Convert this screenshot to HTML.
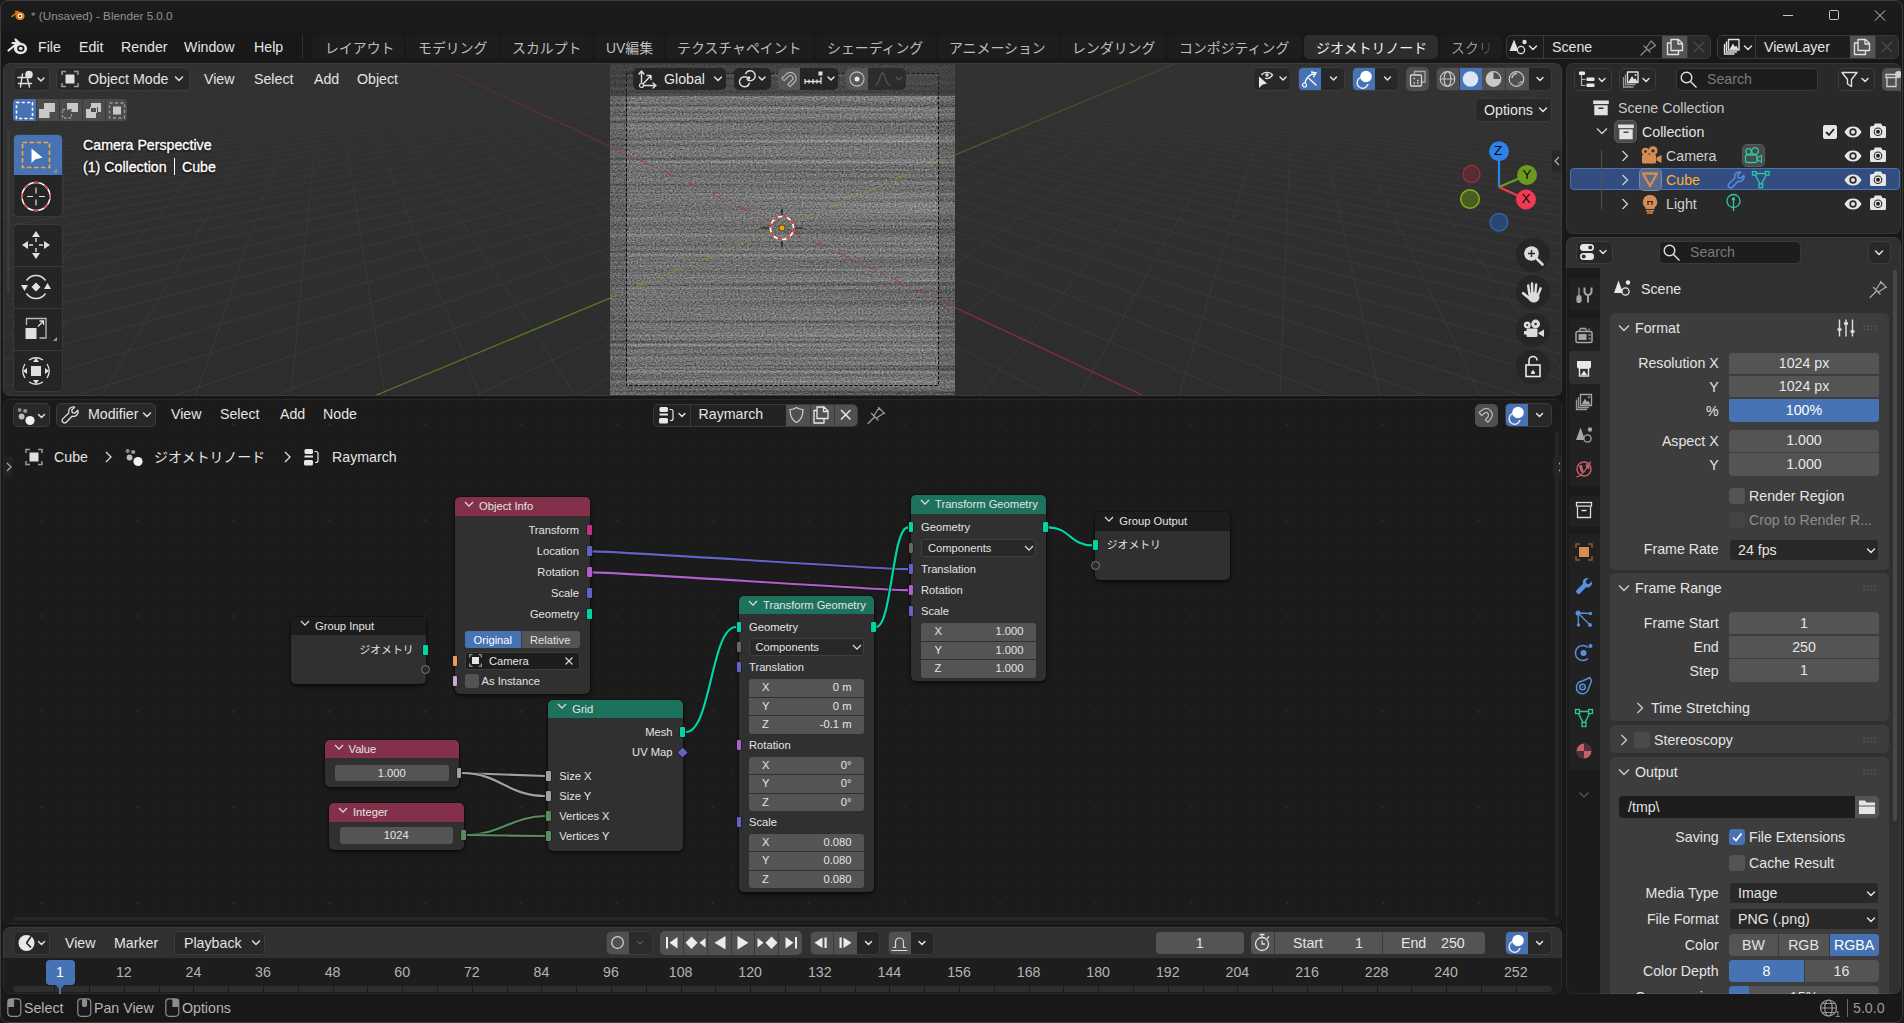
<!DOCTYPE html>
<html lang="ja">
<head>
<meta charset="utf-8">
<title>* (Unsaved) - Blender 5.0.0</title>
<style>
*{box-sizing:border-box;margin:0;padding:0}
html,body{width:1904px;height:1023px;overflow:hidden;background:#181818}
body{position:relative;font-family:"Liberation Sans","Noto Sans CJK JP",sans-serif;font-size:14.2px;color:#e4e4e4;line-height:1}
.abs,.abs *{position:absolute}
.a{position:absolute}
.t{position:absolute;white-space:nowrap;line-height:20px;height:20px}
.jp{font-size:13.9px}
.area{position:absolute;border-radius:7px;overflow:hidden}
.area::after{content:"";position:absolute;left:0;top:0;right:0;bottom:0;border-radius:7px;border:1px solid rgba(255,255,255,.06);pointer-events:none}
.btn{position:absolute;background:#282828;border:1px solid #3c3c3c;border-radius:5px}
.fld{position:absolute;background:#545454;text-align:center;line-height:21px;height:21px;color:#e6e6e6}
.sel{background:#4772b3}
.lbl{position:absolute;text-align:right;white-space:nowrap;line-height:20px;height:20px}
svg{position:absolute;overflow:visible}
.ic{fill:none;stroke:#e0e0e0;stroke-width:1.4;stroke-linecap:round;stroke-linejoin:round}
.icf{fill:#e0e0e0;stroke:none}
.chev{fill:none;stroke:#e0e0e0;stroke-width:1.5;stroke-linecap:round;stroke-linejoin:round}
.n{font-size:11.2px}
.n .t{line-height:16px;height:16px}
.node{position:absolute;background:#303030;border-radius:5px;box-shadow:0 2px 4px rgba(0,0,0,.6),0 0 0 1px #141414}
.nh{position:absolute;left:0;top:0;right:0;height:21px;border-radius:5px 5px 0 0}
.nf{position:absolute;background:#545454;height:18px;line-height:18px}
.sock{position:absolute;width:6px;height:12px;border-radius:1px}
</style>
</head>
<body>
<!-- ===== Title bar ===== -->
<div class="a" style="left:0;top:0;width:1904px;height:31px;background:#1b1b1b"></div>
<svg style="left:10px;top:7px" width="16" height="16" viewBox="0 0 16 16"><path d="M2 9.5 L8 4.5 L5.5 4.5 M8 4.5 L9.8 6" fill="none" stroke="#ea7600" stroke-width="1.6" stroke-linecap="round" stroke-linejoin="round"/><ellipse cx="10" cy="9" rx="4.6" ry="4.1" fill="#ea7600"/><circle cx="10.2" cy="9" r="2.4" fill="#fff"/><circle cx="10.2" cy="9" r="1.3" fill="#265787"/></svg>
<div class="t" style="left:31px;top:6px;font-size:11.7px;color:#929292">* (Unsaved) - Blender 5.0.0</div>
<svg style="left:1783px;top:10px" width="110" height="12" viewBox="0 0 110 12" fill="none" stroke="#c8c8c8" stroke-width="1"><path d="M0 5.5h10"/><rect x="46.5" y="0.5" width="9" height="9" rx="1"/><path d="M92 0.5l10 10M102 0.5l-10 10"/></svg>
<!-- ===== Top bar ===== -->
<div class="a" style="left:0;top:31px;width:1904px;height:33px;background:#181818"></div>
<svg style="left:6px;top:36px" width="24" height="22" viewBox="0 0 24 22"><path d="M2.5 14.5 L11.5 7 L6.5 7 M11.5 7 L9.5 3.5 L14 7.5" fill="none" stroke="#e6e6e6" stroke-width="2.2" stroke-linecap="round" stroke-linejoin="round"/><ellipse cx="14.5" cy="12.5" rx="6.6" ry="5.8" fill="#e6e6e6"/><ellipse cx="14.8" cy="12.5" rx="3.6" ry="3.3" fill="#181818"/><ellipse cx="14.8" cy="12.5" rx="1.9" ry="1.8" fill="#e6e6e6"/></svg>
<div class="t" style="left:38px;top:37px">File</div>
<div class="t" style="left:79px;top:37px">Edit</div>
<div class="t" style="left:121px;top:37px">Render</div>
<div class="t" style="left:184px;top:37px">Window</div>
<div class="t" style="left:254px;top:37px">Help</div>
<div class="a" style="left:302px;top:35px;width:1px;height:24px;background:#303030"></div>
<div class="a" style="left:312px;top:35px;width:92px;height:24px;border-radius:5px;background:#1d1d1d"></div>
<div class="a" style="left:406px;top:35px;width:93px;height:24px;border-radius:5px;background:#1d1d1d"></div>
<div class="a" style="left:500px;top:35px;width:93px;height:24px;border-radius:5px;background:#1d1d1d"></div>
<div class="a" style="left:594px;top:35px;width:70px;height:24px;border-radius:5px;background:#1d1d1d"></div>
<div class="a" style="left:665px;top:35px;width:149px;height:24px;border-radius:5px;background:#1d1d1d"></div>
<div class="a" style="left:815px;top:35px;width:121px;height:24px;border-radius:5px;background:#1d1d1d"></div>
<div class="a" style="left:937px;top:35px;width:122px;height:24px;border-radius:5px;background:#1d1d1d"></div>
<div class="a" style="left:1060px;top:35px;width:106px;height:24px;border-radius:5px;background:#1d1d1d"></div>
<div class="a" style="left:1167px;top:35px;width:135px;height:24px;border-radius:5px;background:#1d1d1d"></div>
<div class="a" style="left:1304px;top:35px;width:134px;height:24px;border-radius:5px;background:#2d2d2d"></div>
<div class="a" style="left:1440px;top:35px;width:62px;height:24px;border-radius:5px;background:#1d1d1d"></div>
<div class="t jp" style="margin-top:1px;left:325px;top:37px;color:#bdbdbd">レイアウト</div>
<div class="t jp" style="margin-top:1px;left:418px;top:37px;color:#bdbdbd">モデリング</div>
<div class="t jp" style="margin-top:1px;left:512px;top:37px;color:#bdbdbd">スカルプト</div>
<div class="t jp" style="margin-top:1px;left:606px;top:37px;color:#bdbdbd">UV編集</div>
<div class="t jp" style="margin-top:1px;left:677px;top:37px;color:#bdbdbd">テクスチャペイント</div>
<div class="t jp" style="margin-top:1px;left:827px;top:37px;color:#bdbdbd">シェーディング</div>
<div class="t jp" style="margin-top:1px;left:949px;top:37px;color:#bdbdbd">アニメーション</div>
<div class="t jp" style="margin-top:1px;left:1072px;top:37px;color:#bdbdbd">レンダリング</div>
<div class="t jp" style="margin-top:1px;left:1179px;top:37px;color:#bdbdbd">コンポジティング</div>
<div class="t jp" style="margin-top:1px;left:1316px;top:37px;color:#f0f0f0">ジオメトリノード</div>
<div class="t jp" style="margin-top:1px;left:1451px;top:37px;color:#9a9a9a;width:44px;overflow:hidden;-webkit-mask-image:linear-gradient(90deg,#000 55%,transparent 100%);mask-image:linear-gradient(90deg,#000 55%,transparent 100%)">スクリプト</div>
<!-- scene selector -->
<div class="a" style="left:1505.5px;top:35px;width:205.5px;height:24px;border-radius:5px;background:#1d1d1d;border:1px solid #3a3a3a;overflow:hidden">
  <div class="a" style="left:36px;top:0;width:1px;height:24px;background:#3a3a3a"></div>
  <div class="a" style="left:155.5px;top:-1px;width:24.5px;height:24px;background:#545454"></div>
  <div class="a" style="left:180px;top:-1px;width:1px;height:24px;background:#3a3a3a"></div>
  <div class="a" style="left:181px;top:-1px;width:26px;height:24px;background:#2a2a2a"></div>
</div>
<svg style="left:1508px;top:37px" width="30" height="20" viewBox="0 0 30 20"><path class="icf" d="M6 2.5 L10.5 14 L1.5 14 Z" /><circle class="icf" cx="16.5" cy="5" r="2.2"/><circle cx="13" cy="13" r="3.6" fill="#1d1d1d" stroke="#e0e0e0" stroke-width="1.3"/><path class="chev" d="M21.5 9 l3.5 3.5 l3.5 -3.5"/></svg>
<div class="t" style="left:1552px;top:37px">Scene</div>
<svg style="left:1639px;top:38px" width="20" height="20" viewBox="0 0 20 20"><path d="M2 17 L8 11 M5 8 L11 14 M7.5 9.5 L12 3 L16.5 7.5 L10 12" fill="none" stroke="#8a8a8a" stroke-width="1.3" stroke-linejoin="round" stroke-linecap="round"/></svg>
<svg style="left:1664.5px;top:38px" width="20" height="18" viewBox="0 0 20 18"><path class="ic" d="M6 3.5 V1.5 H13.5 L17.5 5.5 V12.5 H6 V3.5 M13 1.5 V6 H17.5 M6 5 H2.5 V16.5 H13.5 V12.5"/></svg>
<svg style="left:1692.5px;top:41px" width="12" height="12" viewBox="0 0 12 12"><path d="M1 1 L11 11 M11 1 L1 11" stroke="#4a4a4a" stroke-width="1.5" fill="none"/></svg>
<!-- view layer selector -->
<div class="a" style="left:1717px;top:35px;width:182px;height:24px;border-radius:5px;background:#1d1d1d;border:1px solid #3a3a3a;overflow:hidden">
  <div class="a" style="left:36.5px;top:0;width:1px;height:24px;background:#3a3a3a"></div>
  <div class="a" style="left:132px;top:-1px;width:24.5px;height:24px;background:#545454"></div>
  <div class="a" style="left:156.5px;top:-1px;width:1px;height:24px;background:#3a3a3a"></div>
  <div class="a" style="left:157.5px;top:-1px;width:26px;height:24px;background:#2a2a2a"></div>
</div>
<svg style="left:1722px;top:37px" width="32" height="20" viewBox="0 0 32 20"><path class="ic" d="M6.5 2.5 H17 V13 H6.5 Z M4.5 5 V15 H14.5 M2.5 7.5 V17 H12" stroke-width="1.3"/><path class="icf" d="M7.5 12.5 L11 6.5 L13 10 L14.2 8.5 L16.5 12.5 Z"/><path class="chev" d="M22.5 9 l3.5 3.5 l3.5 -3.5"/></svg>
<div class="t" style="left:1764px;top:37px">ViewLayer</div>
<svg style="left:1852px;top:38px" width="20" height="18" viewBox="0 0 20 18"><path class="ic" d="M6 3.5 V1.5 H13.5 L17.5 5.5 V12.5 H6 V3.5 M13 1.5 V6 H17.5 M6 5 H2.5 V16.5 H13.5 V12.5"/></svg>
<svg style="left:1880.5px;top:41px" width="12" height="12" viewBox="0 0 12 12"><path d="M1 1 L11 11 M11 1 L1 11" stroke="#4a4a4a" stroke-width="1.5" fill="none"/></svg>

<!-- ===== 3D Viewport ===== -->
<div class="area" id="view3d" style="left:3px;top:62.8px;width:1558.5px;height:333px;background:linear-gradient(#313131,#2d2d2d)"><div class="a" style="left:1px;top:1.2px;width:1557px;height:331.8px">
<svg style="left:0;top:0" width="1557" height="331" viewBox="0 0 1557 331">
  <defs>
    <linearGradient id="gfade" x1="0" y1="0" x2="0" y2="1"><stop offset="0" stop-color="#fff" stop-opacity="0.08"/><stop offset="0.45" stop-color="#fff" stop-opacity="0.5"/><stop offset="1" stop-color="#fff" stop-opacity="0.62"/></linearGradient>
    <linearGradient id="afade" x1="0" y1="0" x2="0" y2="1"><stop offset="0" stop-color="#fff" stop-opacity="0.3"/><stop offset="0.5" stop-color="#fff" stop-opacity="0.9"/><stop offset="1" stop-color="#fff" stop-opacity="1"/></linearGradient><mask id="amask"><rect x="0" y="0" width="1557" height="331" fill="url(#afade)"/></mask><mask id="gmask"><rect x="0" y="0" width="1557" height="331" fill="url(#gfade)"/></mask>
    <filter id="noise" x="0" y="0" width="100%" height="100%" color-interpolation-filters="sRGB">
      <feTurbulence type="fractalNoise" baseFrequency="0.0015 0.3" numOctaves="2" seed="4" result="t1"/>
      <feColorMatrix in="t1" type="matrix" values="0.8 0 0 0 0.1  0.8 0 0 0 0.1  0.8 0 0 0 0.1  0 0 0 0 1" result="b"/>
      <feTurbulence type="fractalNoise" baseFrequency="0.55 0.75" numOctaves="1" seed="9" result="t2"/>
      <feColorMatrix in="t2" type="matrix" values="1 0 0 0 0  1 0 0 0 0  1 0 0 0 0  0 0 0 0 1" result="f"/>
      <feComposite in="b" in2="f" operator="arithmetic" k1="0" k2="0.45" k3="0.55" k4="-0.068"/>
    </filter>
  </defs>
  <g mask="url(#gmask)"><path d="M0 21L378 0M0 22L391 0M0 23L404 0M0 24L418 0M0 25L431 0M0 26L444 0M0 28L457 0M0 29L470 0M0 30L484 0M0 31L497 0M0 33L510 0M0 34L523 0M0 36L536 0M0 37L550 0M0 39L563 0M0 40L576 0M0 42L589 0M0 44L603 0M0 46L616 0M0 48L629 0M0 50L642 0M0 52L655 0M0 54L669 0M0 56L682 0M0 58L695 0M0 61L708 0M0 63L721 0M0 66L735 0M0 69L748 0M0 72L761 0M0 75L774 0M0 78L787 0M0 82L801 0M0 85L814 0M0 89L827 0M22 20L0 25M0 93L840 0M45 18L0 29M0 98L853 0M66 17L0 34M0 102L867 0M87 16L0 40M0 107L880 0M107 15L0 47M0 112L893 0M126 14L-0 55M0 118L906 0M145 13L0 64M0 124L919 0M163 12L0 75M0 130L933 0M181 11L0 89M0 137L946 0M198 10L0 105M0 145L959 0M215 9L0 126M0 153L972 0M231 8L0 154M0 162L985 0M246 7L-0 192M0 171L999 0M262 6L0 247M0 182L1012 0M276 6L3 331M0 193L1025 0M291 5L98 331M0 206L1038 0M304 4L192 331M0 220L1051 0M318 3L287 331M0 236L1065 0M331 3L381 331M0 253L1078 0M344 2L476 331M0 273L1091 0M356 1L571 331M0 296L1104 0M369 1L665 331M0 323L1117 0M381 0L760 331M72 331L1131 0M393 0L854 331M172 331L1144 0M405 0L949 331M272 331L1157 0M418 0L1044 331M473 331L1183 0M443 0L1233 331M573 331L1195 1M455 0L1327 331M674 331L1207 2M468 0L1422 331M774 331L1220 3M480 0L1516 331M874 331L1233 3M493 0L1557 315M975 331L1246 4M505 0L1557 290M1075 331L1260 5M517 0L1557 268M1175 331L1274 6M530 0L1557 249M1276 331L1289 7M542 0L1557 232M1376 331L1304 7M555 0L1557 217M1476 331L1320 8M567 0L1557 203M1557 305L1336 9M580 0L1557 191M1557 212L1352 10M592 0L1557 180M1557 158L1370 11M605 0L1557 170M1557 123L1387 12M617 0L1557 160M1557 97L1406 13M629 0L1557 152M1557 79L1425 15M642 0L1557 144M1557 64L1444 16M654 0L1557 137M1557 52L1465 17M667 0L1557 130M1557 43L1486 18M679 0L1557 124M1557 35L1508 19M692 0L1557 118M1557 28L1531 21M704 0L1557 112M1557 23L1555 22M717 0L1557 107M729 0L1557 102M741 0L1557 98M754 0L1557 93M766 0L1557 89M779 0L1557 86M791 0L1557 82M804 0L1557 79M816 0L1557 75M829 0L1557 72M841 0L1557 69M853 0L1557 67M866 0L1557 64M878 0L1557 61M891 0L1557 59M903 0L1557 57M916 0L1557 54M928 0L1557 52M941 0L1557 50M953 0L1557 48M965 0L1557 46M978 0L1557 44M990 0L1557 43M1003 0L1557 41M1015 0L1557 39M1028 0L1557 38M1040 0L1557 36M1053 0L1557 35M1065 0L1557 33M1077 0L1557 32M1090 0L1557 31M1102 0L1557 29M1115 0L1557 28M1127 0L1557 27M1140 0L1557 26M1152 0L1557 24M1165 0L1557 23M1177 0L1557 22" fill="none" stroke="#424242" stroke-width="1"/></g>
  <g mask="url(#amask)"><path d="M430.3 0.0L1138.1 331.0" stroke="#8e2b3d" stroke-width="1.3" fill="none"/>
  <path d="M372.6 331.0L1170.2 0.0" stroke="#587f1f" stroke-width="1.3" fill="none"/></g>
  <!-- noise plane -->
  <rect x="606" y="0" width="345" height="331" fill="#7a7a7a" filter="url(#noise)"/>
  <path d="M606 0H951V331H606Z M623 9H934.5V321.5H623Z" fill="#000" fill-opacity="0.12" fill-rule="evenodd"/>
  <path d="M430.3 0.0L1138.1 331.0" stroke="#b03048" stroke-width="1.2" fill="none" stroke-dasharray="12 7 2 7" opacity=".75" clip-path="inset(0)" mask="url(#nm)"/>
  <mask id="nm"><rect x="606" y="32" width="345" height="299" fill="#fff"/></mask>
  <path d="M372.6 331.0L1170.2 0.0" stroke="#6f9a28" stroke-width="1.2" fill="none" stroke-dasharray="16 8 3 8" opacity=".75" mask="url(#nm)"/>
  <rect x="622.5" y="9.5" width="312" height="312" fill="none" stroke="#000" stroke-width="1" stroke-dasharray="3 2"/>
  <!-- header overlay tint over noise -->
  <rect x="606" y="0" width="345" height="32" fill="#2a2a2a" fill-opacity="0.55"/>
  <!-- 3D cursor / origin -->
  <g transform="translate(778,164)">
    <path d="M0 -21V-13 M0 13V21 M-21 0H-13 M13 0H21" stroke="#111" stroke-width="1.2"/>
    <path d="M0 -22v3 M0 19v3" stroke="#4a7fd6" stroke-width="1.4"/>
    <circle r="11.5" fill="none" stroke="#fff" stroke-width="1.6"/>
    <circle r="11.5" fill="none" stroke="#e03434" stroke-width="1.8" stroke-dasharray="4.5 4.53"/>
    <circle r="3" fill="#f5a00f" stroke="#222" stroke-width=".6"/>
  </g>
</svg>
<!-- header left -->
<div class="btn" style="left:9px;top:3px;width:37px;height:24px"></div>
<svg style="left:13px;top:6px" width="32" height="18" viewBox="0 0 32 18"><path class="ic" d="M1 7.5H14 M1.5 13.5H14.5 M5.5 4 L3.5 17 M10.5 9 L12.5 17" stroke-width="1.2"/><circle class="icf" cx="12" cy="4.5" r="3.8"/><path class="chev" d="M21 8l3 3l3 -3"/></svg>
<div class="btn" style="left:52px;top:3px;width:134px;height:24px"></div>
<svg style="left:57px;top:6px" width="18" height="18" viewBox="0 0 18 18"><rect class="icf" x="4.5" y="4.5" width="9" height="9" rx=".5"/><path d="M1 5V1.5H5 M13 1.5H17V5 M17 13V16.5H13 M5 16.5H1V13" fill="none" stroke="#9a9a9a" stroke-width="1.5"/></svg>
<div class="t" style="left:84px;top:5px">Object Mode</div>
<svg style="left:170px;top:11px" width="10" height="8" viewBox="0 0 10 8"><path class="chev" d="M1.5 2l3.5 3.5l3.5 -3.5"/></svg>
<div class="t" style="left:200px;top:5px">View</div>
<div class="t" style="left:250px;top:5px">Select</div>
<div class="t" style="left:310px;top:5px">Add</div>
<div class="t" style="left:353px;top:5px">Object</div>
<!-- tool settings: select modes -->
<div class="a" style="left:9px;top:35px;width:114px;height:22.5px;border-radius:4px;background:#4c4c4c;overflow:hidden">
  <div class="a sel" style="left:0;top:0;width:23px;height:23px"></div>
  <div class="a" style="left:23px;top:0;width:1px;height:23px;background:#3a3a3a"></div>
  <div class="a" style="left:46px;top:0;width:1px;height:23px;background:#3a3a3a"></div>
  <div class="a" style="left:69px;top:0;width:1px;height:23px;background:#3a3a3a"></div>
  <div class="a" style="left:92px;top:0;width:1px;height:23px;background:#3a3a3a"></div>
</div>
<svg style="left:9px;top:35px" width="115" height="23" viewBox="0 0 115 23">
  <rect x="3.5" y="3.5" width="16" height="16" fill="none" stroke="#fff" stroke-width="1.6" stroke-dasharray="3 2.3"/>
  <path d="M31 4H42V13H36.5V19H26V10H31Z" fill="#c8c8c8"/>
  <path d="M54 4H65V13H59.5V4Z M54 4H65V13H59V10H54Z" fill="#c8c8c8"/><rect x="49.5" y="10.5" width="9" height="8.5" fill="none" stroke="#999" stroke-width="1.3" stroke-dasharray="2.5 2"/>
  <path d="M78 4H88V13H85V8H78Z M73 10H77V14H82V10H83V19H73Z" fill="#c8c8c8"/><rect x="77.5" y="8.5" width="6" height="5" fill="#4c4c4c" stroke="#c8c8c8" stroke-width="1"/>
  <rect x="96.5" y="4" width="15" height="15" fill="none" stroke="#999" stroke-width="1.3" stroke-dasharray="3 2.5"/><rect x="100" y="7.5" width="8" height="8" fill="#c8c8c8"/>
</svg>
<!-- toolbar -->
<div class="a" style="left:9px;top:70.5px;width:50px;height:83px;border-radius:5px;background:#252525;border:1px solid #3a3a3a;overflow:hidden"><div class="a sel" style="left:-1px;top:-1px;width:50px;height:41px"></div></div>
<div class="a" style="left:9px;top:160px;width:50px;height:168px;border-radius:5px;background:#252525;border:1px solid #3a3a3a"></div>
<div class="a" style="left:10px;top:202px;width:48px;height:1px;background:#3a3a3a"></div>
<div class="a" style="left:10px;top:244px;width:48px;height:1px;background:#3a3a3a"></div>
<div class="a" style="left:10px;top:286px;width:48px;height:1px;background:#3a3a3a"></div>
<div class="a" style="left:2.5px;top:66px;width:3.5px;height:164px;border-radius:2px;background:#3a3a3a"></div>
<svg style="left:9px;top:72px" width="50" height="256" viewBox="0 0 50 256">
  <rect x="9.5" y="6.5" width="27" height="25" fill="none" stroke="#f0a83a" stroke-width="1.7" stroke-dasharray="4.5 2.5"/>
  <path d="M18.5 12.5V27L22 23.5L29.5 21.5Z" fill="#fff"/>
  <path d="M44 32.5V36.5H40Z M44 201V205H40Z" fill="#9a9a9a"/>
  <g transform="translate(23,60.5)"><circle r="14" fill="none" stroke="#fff" stroke-width="1.5"/><circle r="14" fill="none" stroke="#d94a4a" stroke-width="1.7" stroke-dasharray="5.5 5.5" stroke-dashoffset="2.7"/><path d="M0 -9V-3 M0 3V9 M-9 0H-3 M3 0H9" stroke="#ddd" stroke-width="1.2"/></g>
  <g transform="translate(23,109)" fill="#e0e0e0"><path d="M0 -14l4 6h-8z M0 14l4 -6h-8z M-14 0l6 -4v8z M14 0l-6 -4v8z"/><path d="M-.7 -7h1.4v4h-1.4z M-.7 3h1.4v4h-1.4z M-7 -.7h4v1.4h-4z M3 -.7h4v1.4h-4z"/></g>
  <g transform="translate(23,151)"><path d="M-9.5 -6.5A11.5 11.5 0 0 1 9.5 -6.5 M9.5 6.5A11.5 11.5 0 0 1 -9.5 6.5" fill="none" stroke="#e0e0e0" stroke-width="1.4"/><path d="M-15 -2h7l-3.5 6z M15 2h-7l3.5 -6z M0 -4.5l4.5 4.5l-4.5 4.5l-4.5 -4.5z" fill="#e0e0e0"/></g>
  <g transform="translate(23,193)"><rect x="-10.5" y="-1" width="11" height="11" fill="#e0e0e0"/><path d="M-9.5 -4V-10.5H10V9H3.5" fill="none" stroke="#bbb" stroke-width="1.3"/><path d="M2 -2.5L7 -7.5 M3.5 -8h4v4" fill="none" stroke="#e0e0e0" stroke-width="1.3"/></g>
  <g transform="translate(23,235)"><rect x="-5" y="-5" width="10" height="10" fill="#e0e0e0"/><path d="M-7 -11A13 13 0 0 1 7 -11 M11 -7A13 13 0 0 1 11 7 M7 11A13 13 0 0 1 -7 11 M-11 7A13 13 0 0 1 -11 -7" fill="none" stroke="#e0e0e0" stroke-width="1.3"/><path d="M0 -13l3 4h-6z M0 13l3 -4h-6z M-13 0l4 -3v6z M13 0l-4 -3v6z" fill="#e0e0e0"/></g>
</svg>
<div class="t" style="left:79px;top:71px;color:#fff;-webkit-text-stroke:.35px #fff;text-shadow:0 1px 2px #000,0 0 2px #000">Camera Perspective</div>
<div class="t" style="left:79px;top:93px;color:#fff;-webkit-text-stroke:.35px #fff;text-shadow:0 1px 2px #000,0 0 2px #000">(1) Collection <span style="display:inline-block;width:1.5px;height:17px;background:#fff;vertical-align:-3px;margin:0 3px"></span> Cube</div>
<!-- header centre -->
<div class="a" style="left:629px;top:3.7px;width:93px;height:22.3px;border-radius:5px;background:#252525"></div>
<svg style="left:633px;top:5px" width="22" height="20" viewBox="0 0 22 20"><path class="ic" d="M4.5 14V2.5 M2 5L4.5 2L7 5 M6.5 16.5H18.5 M16 14l3 2.5l-3 2.5 M6 15L13.5 7 M10 6.5h4v4" stroke-width="1.2"/><circle cx="4.5" cy="16.5" r="2" fill="#252525" stroke="#e0e0e0" stroke-width="1.2"/></svg>
<div class="t" style="left:660px;top:5px">Global</div>
<svg style="left:709px;top:11px" width="10" height="8" viewBox="0 0 10 8"><path class="chev" d="M1.5 2l3.5 3.5l3.5 -3.5"/></svg>
<div class="a" style="left:730px;top:3.7px;width:37px;height:22.3px;border-radius:5px;background:#252525"></div>
<svg style="left:733px;top:5px" width="32" height="20" viewBox="0 0 32 20"><circle cx="7.5" cy="12.8" r="5" fill="none" stroke="#e0e0e0" stroke-width="1.4" stroke-dasharray="26 5.4" stroke-dashoffset="-1"/><circle cx="13.2" cy="6.8" r="5" fill="none" stroke="#e0e0e0" stroke-width="1.4" stroke-dasharray="26 5.4" stroke-dashoffset="-17"/><circle class="icf" cx="11.7" cy="9" r="1.7"/><path class="chev" d="M22 8l3 3l3 -3"/></svg>
<div class="a" style="left:774px;top:3.7px;width:60px;height:22.3px;border-radius:5px;background:#252525;overflow:hidden"><div class="a" style="left:0;top:0;width:22px;height:24px;background:#565656"></div></div>
<svg style="left:776px;top:5px" width="58" height="20" viewBox="0 0 58 20"><g transform="translate(9.5,10) rotate(45)"><path d="M-4.2 5.5V-1.2A4.2 4.2 0 0 1 4.2 -1.2V5.5" fill="none" stroke="#b4b4b4" stroke-width="4.4"/><path d="M-4.2 4.5V-1.2A4.2 4.2 0 0 1 4.2 -1.2V4.5" fill="none" stroke="#565656" stroke-width="2"/></g><path d="M25 12.5h16 M25 10v5 M29 10.5v4 M33 10v5 M37 10.5v4 M41 8v7" stroke="#e0e0e0" stroke-width="1.3" fill="none"/><rect class="icf" x="38.5" y="2.5" width="4" height="4"/><path class="chev" d="M48 8l3 3l3 -3"/></svg>
<div class="a" style="left:842px;top:3.7px;width:60px;height:22.3px;border-radius:5px;background:#2c2c2c;overflow:hidden"><div class="a" style="left:0;top:0;width:22px;height:24px;background:#565656"></div></div>
<svg style="left:844px;top:5px" width="58" height="20" viewBox="0 0 58 20"><circle cx="9" cy="10" r="7" fill="none" stroke="#b0b0b0" stroke-width="1.3"/><circle cx="9" cy="10" r="2.5" fill="#e8e8e8"/><path d="M27 16C32 16 31.5 4 34.5 4S37 16 42 16" fill="none" stroke="#555" stroke-width="1.3"/><path d="M48 8l3 3l3 -3" fill="none" stroke="#555" stroke-width="1.4"/></svg>
<!-- header right -->
<div class="btn" style="left:1249px;top:3px;width:38px;height:24px"></div>
<svg style="left:1252px;top:5px" width="34" height="20" viewBox="0 0 34 20"><path d="M3 7.5V19l3.3 -3.2l4.7 -1.3Z" fill="#e8e8e8"/><path d="M5.5 6C8 2.5 14 2.5 16.5 6C14 9.5 11 10 9 9.2" fill="none" stroke="#e0e0e0" stroke-width="1.3"/><circle cx="11" cy="6" r="1.7" fill="#e0e0e0"/><path class="chev" d="M24 8l3 3l3 -3"/></svg>
<div class="btn" style="left:1294px;top:3px;width:47px;height:24px;overflow:hidden"><div class="a sel" style="left:-1px;top:-1px;width:23px;height:24px"></div></div>
<svg style="left:1296px;top:5px" width="44" height="20" viewBox="0 0 44 20"><path d="M5 15.5C5 9 10 5 15.5 4 M11.5 3l4.5 1l-2.5 3.8 M9 9.5L16 16" fill="none" stroke="#fff" stroke-width="1.3" stroke-linecap="round"/><circle cx="4.5" cy="16" r="2" fill="#4772b3" stroke="#fff" stroke-width="1.2"/><path class="chev" d="M30.5 8l3 3l3 -3"/></svg>
<div class="btn" style="left:1348px;top:3px;width:47px;height:24px;overflow:hidden"><div class="a sel" style="left:-1px;top:-1px;width:23px;height:24px"></div></div>
<svg style="left:1350px;top:5px" width="44" height="20" viewBox="0 0 44 20"><circle cx="12" cy="7.5" r="5.8" fill="#fff"/><path d="M7 8.5A5.5 5.5 0 1 0 14 15" fill="none" stroke="#dfe6f2" stroke-width="1.4"/><path class="chev" d="M30.5 8l3 3l3 -3"/></svg>
<div class="a" style="left:1402px;top:3px;width:23px;height:24px;border-radius:5px;background:#4f4f4f"></div>
<svg style="left:1404px;top:5px" width="20" height="20" viewBox="0 0 20 20"><path d="M6.5 5.5V2.5H17V13H14" fill="none" stroke="#aaa" stroke-width="1.3"/><rect x="2.5" y="6" width="11" height="11" rx="1" fill="none" stroke="#d8d8d8" stroke-width="1.3"/><path d="M5.5 14h1.5 M9 14h1.5 M5.5 9.5h1.5 M9 11.5h1.5" stroke="#d8d8d8" stroke-width="1.3"/></svg>
<div class="a" style="left:1432px;top:3px;width:116px;height:24px;border-radius:5px;background:#252525;border:1px solid #3a3a3a;overflow:hidden"><div class="a" style="left:-1px;top:-1px;width:93px;height:24px;background:#4f4f4f"></div><div class="a sel" style="left:22px;top:-1px;width:23px;height:24px"></div><div class="a" style="left:22px;top:-1px;width:1px;height:24px;background:#3a3a3a"></div><div class="a" style="left:68px;top:-1px;width:1px;height:24px;background:#3a3a3a"></div></div>
<svg style="left:1432px;top:3px" width="116" height="24" viewBox="0 0 116 24"><g fill="none" stroke="#c8c8c8" stroke-width="1.2"><circle cx="11.5" cy="12" r="7.3"/><ellipse cx="11.5" cy="12" rx="3.4" ry="7.3"/><path d="M4.2 12h14.6"/></g><circle cx="34.5" cy="12" r="7.8" fill="#dde4f4"/><circle cx="57.5" cy="12" r="7.3" fill="none" stroke="#c8c8c8" stroke-width="1.2"/><path d="M57.5 4.7A7.3 7.3 0 1 0 64.8 12H57.5Z" fill="#c8c8c8"/><circle cx="80.5" cy="12" r="7.3" fill="none" stroke="#c8c8c8" stroke-width="1.2"/><path d="M76 11A5 5 0 0 1 81 6.5" fill="none" stroke="#c8c8c8" stroke-width="1.6"/><path d="M84.5 16l2 -2 M82 17.5l3.5 -3.5" stroke="#c8c8c8" stroke-width="1"/><path class="chev" d="M101 10.5l3 3l3 -3"/></svg>
<div class="btn" style="left:1471px;top:34px;width:77px;height:24px"></div>
<div class="t" style="left:1480px;top:36px">Options</div>
<svg style="left:1534px;top:42px" width="10" height="8" viewBox="0 0 10 8"><path class="chev" d="M1.5 2l3.5 3.5l3.5 -3.5"/></svg>
<div class="a" style="left:1548px;top:86px;width:9px;height:22px;border-radius:4px 0 0 4px;background:#262626"></div>
<svg style="left:1549px;top:92px" width="8" height="10" viewBox="0 0 8 10"><path d="M6 1L2 5l4 4" fill="none" stroke="#aaa" stroke-width="1.3"/></svg>
<!-- nav gizmo -->
<svg style="left:1450px;top:70px" width="100" height="110" viewBox="0 0 100 110">
  <g transform="translate(-1454,-134)">
  <path d="M1499 187V151" stroke="#2d82e8" stroke-width="2.2"/><path d="M1499 187L1527 175" stroke="#6b9a1f" stroke-width="2.2"/><path d="M1499 187L1526 199.5" stroke="#ef3a52" stroke-width="2.2"/>
  <circle cx="1471.5" cy="174" r="8.5" fill="#6a2a35" fill-opacity=".75" stroke="#93323f" stroke-width="1.3"/>
  <circle cx="1470" cy="199" r="9.3" fill="#4c5e1e" stroke="#80b223" stroke-width="1.5"/>
  <circle cx="1499" cy="222.3" r="8.8" fill="#284670" stroke="#2f66b3" stroke-width="1.3"/>
  <circle cx="1499" cy="151.3" r="10" fill="#2d82e8"/><circle cx="1527" cy="175" r="10" fill="#6b9a1f"/><circle cx="1526" cy="199.5" r="10" fill="#ef3a52"/>
  </g>
</svg>
<div class="t" style="left:1490px;top:77px;color:#0a0a0a;font-size:13.5px">Z</div>
<div class="t" style="left:1518.5px;top:101px;color:#0a0a0a;font-size:13.5px">Y</div>
<div class="t" style="left:1517.5px;top:125.5px;color:#0a0a0a;font-size:13.5px">X</div>
<div class="a" style="left:1512.3px;top:174.2px;width:33.4px;height:33.4px;border-radius:17px;background:#262626"></div>
<div class="a" style="left:1512.3px;top:211.2px;width:33.4px;height:33.4px;border-radius:17px;background:#262626"></div>
<div class="a" style="left:1512.3px;top:249.2px;width:33.4px;height:33.4px;border-radius:17px;background:#262626"></div>
<div class="a" style="left:1512.3px;top:286.2px;width:33.4px;height:33.4px;border-radius:17px;background:#262626"></div>
<svg style="left:1513px;top:174.7px" width="32" height="144" viewBox="0 0 32 144">
  <circle cx="14.5" cy="14.5" r="7.3" fill="#dcdcdc"/><path d="M20 20l5.5 5.5" stroke="#dcdcdc" stroke-width="2.6" stroke-linecap="round"/><path d="M11 14.5h7 M14.5 11v7" stroke="#252525" stroke-width="1.4"/>
  <g transform="translate(16,54)" fill="#dcdcdc" stroke="#dcdcdc" stroke-linecap="round"><ellipse cx=".8" cy="4.2" rx="5.6" ry="5.2" stroke="none"/><path d="M-3.6 1L-4.8 -7.6 M-.8 0L-1 -9.6 M2.3 .5L3.2 -8.6 M4.8 2.5L7.6 -4.6" stroke-width="2.5" fill="none"/><path d="M-3.5 5.5L-9.8 .2" stroke-width="2.8" fill="none"/></g>
  <g transform="translate(16,91)" fill="#dcdcdc"><circle cx="-5.8" cy="-5" r="3.5"/><circle cx="2.6" cy="-6" r="4.4"/><circle cx="-5.8" cy="-5" r="1" fill="#262626"/><circle cx="2.6" cy="-6" r="1.2" fill="#262626"/><rect x="-6.5" y="-1.5" width="11" height="8.5" rx="1.2"/><rect x="-9" y="1" width="3" height="3.5"/><path d="M5.5 2.8l5.5 -3.3v7.6l-5.5 -3.3z"/></g>
  <g transform="translate(16,128)"><rect x="-7" y="-2" width="14" height="11.5" fill="none" stroke="#e8e8e8" stroke-width="1.6"/><path d="M-4 -2V-6.5A4 4 0 0 1 4 -6.5" fill="none" stroke="#e8e8e8" stroke-width="1.6"/><path d="M-1.8 7h3.6V4.5h-.8L0 2.5L-1 4.5h-.8z" fill="#e8e8e8"/></g>
</svg>
</div></div>
<!-- ===== Node Editor ===== -->
<div class="area n" id="nodeed" style="left:3px;top:399px;width:1558.5px;height:524.5px;background:#1b1b1b"><div class="a" style="left:1px;top:0;width:1557px;height:524.5px">
<svg style="left:0;top:0" width="1557" height="522"><defs>
<pattern id="dsm" x="17.84" y="5.24" width="19.16" height="19.16" patternUnits="userSpaceOnUse"><rect x="0.3" y="0.3" width="1.4" height="1.4" fill="#242424"/></pattern>
<pattern id="dbg" x="36.50" y="23.90" width="95.8" height="95.8" patternUnits="userSpaceOnUse"><rect x="0.5" y="0.5" width="2" height="2" fill="#2c2c2c"/></pattern></defs>
<rect width="1557" height="522" fill="url(#dsm)"/><rect width="1557" height="522" fill="url(#dbg)"/></svg>
<svg style="left:0;top:0" width="1557" height="522"><path d="M588.0 152.3C617.1 152.3 874.9 170.2 904.0 170.2" fill="none" stroke="#111" stroke-width="3.8000000000000003" stroke-opacity=".55"/><path d="M588.0 152.3C617.1 152.3 874.9 170.2 904.0 170.2" fill="none" stroke="#6363c7" stroke-width="2.2"/><path d="M588.0 173.3C617.1 173.3 874.9 191.2 904.0 191.2" fill="none" stroke="#111" stroke-width="3.8000000000000003" stroke-opacity=".55"/><path d="M588.0 173.3C617.1 173.3 874.9 191.2 904.0 191.2" fill="none" stroke="#b05fcf" stroke-width="2.2"/><path d="M458.0 374.0C462.9 374.0 536.1 377.0 541.0 377.0" fill="none" stroke="#111" stroke-width="3.8000000000000003" stroke-opacity=".55"/><path d="M458.0 374.0C462.9 374.0 536.1 377.0 541.0 377.0" fill="none" stroke="#a1a1a1" stroke-width="2.2"/><path d="M458.0 374.0C495.4 374.0 503.6 397.0 541.0 397.0" fill="none" stroke="#111" stroke-width="3.8000000000000003" stroke-opacity=".55"/><path d="M458.0 374.0C495.4 374.0 503.6 397.0 541.0 397.0" fill="none" stroke="#a1a1a1" stroke-width="2.2"/><path d="M463.0 436.0C493.9 436.0 510.1 417.0 541.0 417.0" fill="none" stroke="#111" stroke-width="3.8000000000000003" stroke-opacity=".55"/><path d="M463.0 436.0C493.9 436.0 510.1 417.0 541.0 417.0" fill="none" stroke="#598c5c" stroke-width="2.2"/><path d="M463.0 436.0C464.6 436.0 539.4 437.0 541.0 437.0" fill="none" stroke="#111" stroke-width="3.8000000000000003" stroke-opacity=".55"/><path d="M463.0 436.0C464.6 436.0 539.4 437.0 541.0 437.0" fill="none" stroke="#598c5c" stroke-width="2.2"/><path d="M682.0 333.0C707.0 333.0 707.0 228.0 732.0 228.0" fill="none" stroke="#111" stroke-width="3.8000000000000003" stroke-opacity=".55"/><path d="M682.0 333.0C707.0 333.0 707.0 228.0 732.0 228.0" fill="none" stroke="#00d6a3" stroke-width="2.2"/><path d="M872.0 228.0C888.0 228.0 888.0 128.3 904.0 128.3" fill="none" stroke="#111" stroke-width="3.8000000000000003" stroke-opacity=".55"/><path d="M872.0 228.0C888.0 228.0 888.0 128.3 904.0 128.3" fill="none" stroke="#00d6a3" stroke-width="2.2"/><path d="M1044.0 128.3C1066.0 128.3 1066.0 146.3 1088.0 146.3" fill="none" stroke="#111" stroke-width="3.8000000000000003" stroke-opacity=".55"/><path d="M1044.0 128.3C1066.0 128.3 1066.0 146.3 1088.0 146.3" fill="none" stroke="#00d6a3" stroke-width="2.2"/></svg>
<div class="node" style="left:451px;top:98px;width:134.5px;height:197px"><div class="nh" style="background:#83314a;height:19px"></div><svg style="left:9px;top:3.8px" width="10" height="7" viewBox="0 0 10 7"><path d="M1 1l4 4.2l4-4.2" fill="none" stroke="#e0e0e0" stroke-width="1.2"/></svg><div class="t" style="left:24px;top:1.1px">Object Info</div><div class="t" style="right:10.5px;top:25.299999999999955px">Transform</div><div class="a" style="left:132.1px;top:28.299999999999955px;width:4.8px;height:10px;border-radius:1px;background:#c72e86;box-shadow:0 0 0 .6px #181818"></div><div class="t" style="right:10.5px;top:46.24999999999996px">Location</div><div class="a" style="left:132.1px;top:49.24999999999996px;width:4.8px;height:10px;border-radius:1px;background:#6363c7;box-shadow:0 0 0 .6px #181818"></div><div class="t" style="right:10.5px;top:67.19999999999996px">Rotation</div><div class="a" style="left:132.1px;top:70.19999999999996px;width:4.8px;height:10px;border-radius:1px;background:#b05fcf;box-shadow:0 0 0 .6px #181818"></div><div class="t" style="right:10.5px;top:88.14999999999995px">Scale</div><div class="a" style="left:132.1px;top:91.14999999999995px;width:4.8px;height:10px;border-radius:1px;background:#6363c7;box-shadow:0 0 0 .6px #181818"></div><div class="t" style="right:10.5px;top:109.09999999999995px">Geometry</div><div class="a" style="left:132.1px;top:112.09999999999995px;width:4.8px;height:10px;border-radius:1px;background:#00d6a3;box-shadow:0 0 0 .6px #181818"></div><div class="a" style="left:10px;top:134px;width:115px;height:17px;border-radius:3px;background:#545454;overflow:hidden"><div class="a sel" style="left:0;top:0;width:56px;height:17px"></div><div class="a" style="left:56px;top:0;width:1px;height:17px;background:#3a3a3a"></div></div><div class="t" style="left:18.5px;top:134.5px;color:#fff">Original</div><div class="t" style="left:75px;top:134.5px">Relative</div><div class="a" style="left:10px;top:154.5px;width:115px;height:18px;border-radius:3px;background:#1d1d1d;border:1px solid #3d3d3d"></div><svg style="left:14px;top:157px" width="13" height="13" viewBox="0 0 13 13"><rect x="3" y="3" width="7" height="7" fill="#e6e6e6"/><path d="M.7 3.5V.7H3.5 M9.5 .7H12.3V3.5 M12.3 9.5V12.3H9.5 M3.5 12.3H.7V9.5" fill="none" stroke="#aaa" stroke-width="1.1"/></svg><div class="t" style="left:34px;top:155.5px">Camera</div><svg style="left:110px;top:160px" width="8" height="8" viewBox="0 0 8 8"><path d="M.5 .5l7 7M7.5 .5l-7 7" stroke="#ddd" stroke-width="1.1"/></svg><div class="a" style="left:-2.4px;top:158.5px;width:4.8px;height:10px;border-radius:1px;background:#ed9e5c;box-shadow:0 0 0 .6px #181818"></div><div class="a" style="left:10px;top:177px;width:13.5px;height:13.5px;border-radius:3px;background:#545454"></div><div class="t" style="left:26.5px;top:175.5px">As Instance</div><div class="a" style="left:-2.4px;top:179px;width:4.8px;height:10px;border-radius:1px;background:#cca6d6;box-shadow:0 0 0 .6px #181818"></div></div>
<div class="node" style="left:287px;top:217.5px;width:134.5px;height:67px"><div class="nh" style="background:#1c1c1c;height:18.5px"></div><svg style="left:9px;top:3.8px" width="10" height="7" viewBox="0 0 10 7"><path d="M1 1l4 4.2l4-4.2" fill="none" stroke="#e0e0e0" stroke-width="1.2"/></svg><div class="t" style="left:24px;top:1.1px">Group Input</div><div class="t" style="right:12px;top:25.0px"><span style="font-size:10.8px">ジオメトリ</span></div><div class="a" style="left:132.1px;top:28.0px;width:4.8px;height:10px;border-radius:1px;background:#00d6a3;box-shadow:0 0 0 .6px #181818"></div><div class="a" style="left:130.0px;top:48.0px;width:9px;height:9px;border-radius:5px;background:#2a2a2a;border:1px solid #7a7a7a"></div></div>
<div class="node" style="left:320.5px;top:340.79999999999995px;width:134.5px;height:47px"><div class="nh" style="background:#83314a;height:18.7px"></div><svg style="left:9px;top:3.8px" width="10" height="7" viewBox="0 0 10 7"><path d="M1 1l4 4.2l4-4.2" fill="none" stroke="#e0e0e0" stroke-width="1.2"/></svg><div class="t" style="left:24px;top:1.1px">Value</div><div class="nf" style="left:10.5px;top:25px;width:113.5px;height:16px;line-height:16px;border-radius:3px;text-align:center">1.000</div><div class="a" style="left:132.1px;top:28px;width:4.8px;height:10px;border-radius:1px;background:#a1a1a1;box-shadow:0 0 0 .6px #181818"></div></div>
<div class="node" style="left:325px;top:404px;width:134.5px;height:46.5px"><div class="nh" style="background:#83314a;height:18.5px"></div><svg style="left:9px;top:3.8px" width="10" height="7" viewBox="0 0 10 7"><path d="M1 1l4 4.2l4-4.2" fill="none" stroke="#e0e0e0" stroke-width="1.2"/></svg><div class="t" style="left:24px;top:1.1px">Integer</div><div class="nf" style="left:10.5px;top:24px;width:113.5px;height:17px;line-height:17px;border-radius:3px;text-align:center">1024</div><div class="a" style="left:132.1px;top:27px;width:4.8px;height:10px;border-radius:1px;background:#598c5c;box-shadow:0 0 0 .6px #181818"></div></div>
<div class="node" style="left:544.2px;top:300.5px;width:134.8px;height:151px"><div class="nh" style="background:#1d725e;height:18.7px"></div><svg style="left:9px;top:3.8px" width="10" height="7" viewBox="0 0 10 7"><path d="M1 1l4 4.2l4-4.2" fill="none" stroke="#e0e0e0" stroke-width="1.2"/></svg><div class="t" style="left:24px;top:1.1px">Grid</div><div class="t" style="right:10.5px;top:24.5px">Mesh</div><div class="a" style="left:132.1px;top:27.5px;width:4.8px;height:10px;border-radius:1px;background:#00d6a3;box-shadow:0 0 0 .6px #181818"></div><div class="t" style="right:10.5px;top:44.89999999999998px">UV Map</div><div class="a" style="left:130.9px;top:49.299999999999976px;width:7.2px;height:7.2px;background:#6363c7;transform:rotate(45deg);box-shadow:0 0 0 .6px #111"></div><div class="t" style="left:11px;top:68.5px">Size X</div><div class="a" style="left:-2.4px;top:71.5px;width:4.8px;height:10px;border-radius:1px;background:#a1a1a1;box-shadow:0 0 0 .6px #181818"></div><div class="t" style="left:11px;top:88.5px">Size Y</div><div class="a" style="left:-2.4px;top:91.5px;width:4.8px;height:10px;border-radius:1px;background:#a1a1a1;box-shadow:0 0 0 .6px #181818"></div><div class="t" style="left:11px;top:108.70000000000005px">Vertices X</div><div class="a" style="left:-2.4px;top:111.70000000000005px;width:4.8px;height:10px;border-radius:1px;background:#598c5c;box-shadow:0 0 0 .6px #181818"></div><div class="t" style="left:11px;top:128.5px">Vertices Y</div><div class="a" style="left:-2.4px;top:131.5px;width:4.8px;height:10px;border-radius:1px;background:#598c5c;box-shadow:0 0 0 .6px #181818"></div></div>
<div class="node" style="left:735px;top:197.29999999999995px;width:134.5px;height:295.5px"><div class="nh" style="background:#1d725e;height:17.5px"></div><svg style="left:9px;top:3.8px" width="10" height="7" viewBox="0 0 10 7"><path d="M1 1l4 4.2l4-4.2" fill="none" stroke="#e0e0e0" stroke-width="1.2"/></svg><div class="t" style="left:24px;top:1.1px">Transform Geometry</div><div class="t" style="left:10px;top:22.700000000000045px">Geometry</div><div class="a" style="left:-2.4px;top:25.700000000000045px;width:4.8px;height:10px;border-radius:1px;background:#00d6a3;box-shadow:0 0 0 .6px #181818"></div><div class="a" style="left:132.1px;top:25.700000000000045px;width:4.8px;height:10px;border-radius:1px;background:#00d6a3;box-shadow:0 0 0 .6px #181818"></div><div class="a" style="left:9.5px;top:42.200000000000045px;width:115px;height:17.5px;border-radius:3px;background:#282828;border:1px solid #3f3f3f"></div><div class="t" style="left:16.5px;top:43.200000000000045px">Components</div><svg style="left:112.5px;top:48.200000000000045px" width="10" height="7" viewBox="0 0 10 7"><path d="M1 1l4 4.2l4-4.2" fill="none" stroke="#e0e0e0" stroke-width="1.2"/></svg><div class="a" style="left:-2.4px;top:45.700000000000045px;width:4.8px;height:10px;border-radius:1px;background:#666666;box-shadow:0 0 0 .6px #181818"></div><div class="t" style="left:10px;top:62.700000000000045px">Translation</div><div class="a" style="left:-2.4px;top:65.70000000000005px;width:4.8px;height:10px;border-radius:1px;background:#6363c7;box-shadow:0 0 0 .6px #181818"></div><div class="nf" style="left:9.5px;top:82.90000000000009px;width:115px;height:17.6px;line-height:17.6px;border-radius:3px 3px 0 0"><span class="a" style="left:13.5px">X</span><span class="a" style="right:12px">0 m</span></div><div class="nf" style="left:9.5px;top:101.50000000000009px;width:115px;height:17.6px;line-height:17.6px;border-radius:0"><span class="a" style="left:13.5px">Y</span><span class="a" style="right:12px">0 m</span></div><div class="nf" style="left:9.5px;top:120.1000000000001px;width:115px;height:17.6px;line-height:17.6px;border-radius:0 0 3px 3px"><span class="a" style="left:13.5px">Z</span><span class="a" style="right:12px">-0.1 m</span></div><div class="t" style="left:10px;top:140.5px">Rotation</div><div class="a" style="left:-2.4px;top:143.5px;width:4.8px;height:10px;border-radius:1px;background:#b05fcf;box-shadow:0 0 0 .6px #181818"></div><div class="nf" style="left:9.5px;top:160.4000000000001px;width:115px;height:17.6px;line-height:17.6px;border-radius:3px 3px 0 0"><span class="a" style="left:13.5px">X</span><span class="a" style="right:12px">0°</span></div><div class="nf" style="left:9.5px;top:179.00000000000009px;width:115px;height:17.6px;line-height:17.6px;border-radius:0"><span class="a" style="left:13.5px">Y</span><span class="a" style="right:12px">0°</span></div><div class="nf" style="left:9.5px;top:197.60000000000008px;width:115px;height:17.6px;line-height:17.6px;border-radius:0 0 3px 3px"><span class="a" style="left:13.5px">Z</span><span class="a" style="right:12px">0°</span></div><div class="t" style="left:10px;top:217.5px">Scale</div><div class="a" style="left:-2.4px;top:220.5px;width:4.8px;height:10px;border-radius:1px;background:#6363c7;box-shadow:0 0 0 .6px #181818"></div><div class="nf" style="left:9.5px;top:237.4000000000001px;width:115px;height:17.6px;line-height:17.6px;border-radius:3px 3px 0 0"><span class="a" style="left:13.5px">X</span><span class="a" style="right:12px">0.080</span></div><div class="nf" style="left:9.5px;top:256.0000000000001px;width:115px;height:17.6px;line-height:17.6px;border-radius:0"><span class="a" style="left:13.5px">Y</span><span class="a" style="right:12px">0.080</span></div><div class="nf" style="left:9.5px;top:274.6000000000001px;width:115px;height:17.6px;line-height:17.6px;border-radius:0 0 3px 3px"><span class="a" style="left:13.5px">Z</span><span class="a" style="right:12px">0.080</span></div></div>
<div class="node" style="left:907px;top:96.30000000000001px;width:134.5px;height:185.5px"><div class="nh" style="background:#1d725e;height:19px"></div><svg style="left:9px;top:3.8px" width="10" height="7" viewBox="0 0 10 7"><path d="M1 1l4 4.2l4-4.2" fill="none" stroke="#e0e0e0" stroke-width="1.2"/></svg><div class="t" style="left:24px;top:1.1px">Transform Geometry</div><div class="t" style="left:10px;top:23.999999999999943px">Geometry</div><div class="a" style="left:-2.4px;top:26.999999999999943px;width:4.8px;height:10px;border-radius:1px;background:#00d6a3;box-shadow:0 0 0 .6px #181818"></div><div class="a" style="left:132.1px;top:26.999999999999943px;width:4.8px;height:10px;border-radius:1px;background:#00d6a3;box-shadow:0 0 0 .6px #181818"></div><div class="a" style="left:10px;top:44.19999999999999px;width:114.5px;height:17.5px;border-radius:3px;background:#282828;border:1px solid #3f3f3f"></div><div class="t" style="left:17px;top:45.19999999999999px">Components</div><svg style="left:112.5px;top:50.19999999999999px" width="10" height="7" viewBox="0 0 10 7"><path d="M1 1l4 4.2l4-4.2" fill="none" stroke="#e0e0e0" stroke-width="1.2"/></svg><div class="a" style="left:-2.4px;top:47.69999999999999px;width:4.8px;height:10px;border-radius:1px;background:#666666;box-shadow:0 0 0 .6px #181818"></div><div class="t" style="left:10px;top:65.90000000000003px">Translation</div><div class="a" style="left:-2.4px;top:68.90000000000003px;width:4.8px;height:10px;border-radius:1px;background:#6363c7;box-shadow:0 0 0 .6px #181818"></div><div class="t" style="left:10px;top:86.90000000000003px">Rotation</div><div class="a" style="left:-2.4px;top:89.90000000000003px;width:4.8px;height:10px;border-radius:1px;background:#b05fcf;box-shadow:0 0 0 .6px #181818"></div><div class="t" style="left:10px;top:107.90000000000003px">Scale</div><div class="a" style="left:-2.4px;top:110.90000000000003px;width:4.8px;height:10px;border-radius:1px;background:#6363c7;box-shadow:0 0 0 .6px #181818"></div><div class="nf" style="left:10px;top:127.69999999999999px;width:114.5px;height:17.6px;line-height:17.6px;border-radius:3px 3px 0 0"><span class="a" style="left:13.5px">X</span><span class="a" style="right:12px">1.000</span></div><div class="nf" style="left:10px;top:146.29999999999998px;width:114.5px;height:17.6px;line-height:17.6px;border-radius:0"><span class="a" style="left:13.5px">Y</span><span class="a" style="right:12px">1.000</span></div><div class="nf" style="left:10px;top:164.89999999999998px;width:114.5px;height:17.6px;line-height:17.6px;border-radius:0 0 3px 3px"><span class="a" style="left:13.5px">Z</span><span class="a" style="right:12px">1.000</span></div></div>
<div class="node" style="left:1091.3px;top:113.29999999999995px;width:134.5px;height:68px"><div class="nh" style="background:#1c1c1c;height:18.7px"></div><svg style="left:9px;top:3.8px" width="10" height="7" viewBox="0 0 10 7"><path d="M1 1l4 4.2l4-4.2" fill="none" stroke="#e0e0e0" stroke-width="1.2"/></svg><div class="t" style="left:24px;top:1.1px">Group Output</div><div class="t" style="left:11.5px;top:25.0px"><span style="font-size:10.8px">ジオメトリ</span></div><div class="a" style="left:-2.4px;top:28.0px;width:4.8px;height:10px;border-radius:1px;background:#00d6a3;box-shadow:0 0 0 .6px #181818"></div><div class="a" style="left:-4.5px;top:49.200000000000045px;width:9px;height:9px;border-radius:5px;background:#2a2a2a;border:1px solid #7a7a7a"></div></div>
<div class="a" style="left:0;top:0.3px;width:0;height:0">
<div class="btn" style="left:9px;top:4px;width:37px;height:24px"></div>
<svg style="left:12px;top:7px;font-size:14.2px" width="34" height="20" viewBox="0 0 34 20"><circle cx="3.6" cy="4" r="2" fill="#8a8a8a"/><circle cx="9.2" cy="5" r="2.1" fill="#9a9a9a"/><circle cx="5.6" cy="10.5" r="2.9" fill="#bdbdbd"/><circle cx="14" cy="14.5" r="4.6" fill="#f0f0f0"/><path class="chev" d="M22.5 8.5l3 3l3 -3"/></svg>
<div class="btn" style="left:52px;top:4px;width:100px;height:24px"></div>
<svg style="left:56px;top:6px" width="20" height="20" viewBox="0 0 20 20"><path d="M3 17.2a2.3 2.3 0 0 1 -.3 -3.3L8.8 8a4.6 4.6 0 0 1 5.8 -5.8L11.7 5l.6 2.6l2.6 .6l2.9 -2.9A4.6 4.6 0 0 1 12 11.2L6.3 17.2a2.3 2.3 0 0 1 -3.3 0Z" fill="none" stroke="#e0e0e0" stroke-width="1.3" stroke-linejoin="round"/></svg>
<div class="t" style="left:84px;top:7px;font-size:14.2px">Modifier</div>
<svg style="left:138px;top:12px" width="10" height="8" viewBox="0 0 10 8"><path class="chev" d="M1.5 2l3.5 3.5l3.5 -3.5"/></svg>
<div class="t" style="left:167px;top:7px;font-size:14.2px">View</div>
<div class="t" style="left:216px;top:7px;font-size:14.2px">Select</div>
<div class="t" style="left:276px;top:7px;font-size:14.2px">Add</div>
<div class="t" style="left:319px;top:7px;font-size:14.2px">Node</div>
<div class="a" style="left:648.5px;top:4.5px;width:205.5px;height:23px;border-radius:5px;background:#222;border:1px solid #3a3a3a;overflow:hidden"><div class="a" style="left:36px;top:0;width:1px;height:23px;background:#3a3a3a"></div><div class="a" style="left:132px;top:-1px;width:73px;height:23px;background:#505050"></div><div class="a" style="left:156px;top:-1px;width:1px;height:23px;background:#3a3a3a"></div><div class="a" style="left:180px;top:-1px;width:1px;height:23px;background:#3a3a3a"></div></div>
<svg style="left:653px;top:6px" width="32" height="20" viewBox="0 0 32 20"><rect x="2.5" y="2" width="8.5" height="5" rx="1.5" fill="#e8e8e8"/><rect x="2.5" y="8.5" width="8.5" height="2" rx=".5" fill="#e8e8e8"/><rect x="2" y="13" width="9" height="5.5" rx="1.5" fill="#e8e8e8"/><path d="M12.5 4.5h1.5a2 2 0 0 1 2 2v7a2 2 0 0 1 -2 2h-1" fill="none" stroke="#e8e8e8" stroke-width="1.2"/><path class="chev" d="M22 8.5l3 3l3 -3"/></svg>
<div class="t" style="left:694.5px;top:7px;font-size:14.2px">Raymarch</div>
<svg style="left:783px;top:6px" width="72" height="20" viewBox="0 0 72 20"><path d="M9.5 2.5c2 1.5 4.5 2 6.5 2c0 6 -1.5 10.5 -6.5 13c-5 -2.5 -6.5 -7 -6.5 -13c2 0 4.5 -.5 6.5 -2Z" fill="none" stroke="#cfcfcf" stroke-width="1.2"/><path d="M30 4.5V2h7l4 4v7.5H30V4.5 M36.5 2v4.5h4.5 M30 5.5h-3V18h10v-4" fill="none" stroke="#e8e8e8" stroke-width="1.3" stroke-linejoin="round"/><path d="M54 5l9.5 9.5M63.5 5l-9.5 9.5" stroke="#e8e8e8" stroke-width="1.5"/></svg>
<svg style="left:862px;top:5px" width="22" height="22" viewBox="0 0 22 22"><path d="M2 19.5L8.5 13 M5.5 9.5L12 16 M8 11.5L13 4l5 5L10.5 14 M12.5 3.5l6 6" fill="none" stroke="#9a9a9a" stroke-width="1.3" stroke-linejoin="round" stroke-linecap="round"/></svg>
<div class="a" style="left:1470.5px;top:4.5px;width:23px;height:23px;border-radius:5px;background:#505050"></div>
<svg style="left:1473px;top:7px" width="18" height="18" viewBox="0 0 18 18"><path d="M2 6.5L6.5 3A6.3 6.3 0 0 1 14 12.5L11 16.2L8.3 14L11.2 10.5A2.7 2.7 0 0 0 8.5 6.5L4.7 9.5Z" fill="none" stroke="#b8b8b8" stroke-width="1.2" stroke-linejoin="round"/></svg>
<div class="btn" style="left:1500.5px;top:4px;width:47px;height:24px;overflow:hidden"><div class="a sel" style="left:-1px;top:-1px;width:23px;height:24px"></div></div>
<svg style="left:1502px;top:6px" width="44" height="20" viewBox="0 0 44 20"><circle cx="12" cy="7.5" r="5.8" fill="#fff"/><path d="M7 8.5A5.5 5.5 0 1 0 14 15" fill="none" stroke="#dfe6f2" stroke-width="1.4"/><path class="chev" d="M30.5 8.5l3 3l3 -3"/></svg>
</div><div class="a" style="left:0;top:57px;width:9px;height:22px;border-radius:0 4px 4px 0;background:#222"></div>
<svg style="left:1px;top:63px" width="8" height="10" viewBox="0 0 8 10"><path d="M2 1l4 4l-4 4" fill="none" stroke="#aaa" stroke-width="1.2"/></svg>
<div class="a" style="left:1548.5px;top:57px;width:9px;height:22px;border-radius:4px 0 0 4px;background:#222"></div>
<svg style="left:1549.5px;top:63px" width="8" height="10" viewBox="0 0 8 10"><path d="M6 1L2 5l4 4" fill="none" stroke="#aaa" stroke-width="1.2"/></svg>
<div class="a" style="left:1550.5px;top:33px;width:4px;height:485px;border-radius:2px;background:#262626"></div>
<div class="a" style="left:9px;top:517.5px;width:1535px;height:4.5px;border-radius:2px;background:#262626"></div>
<!-- breadcrumbs -->
<svg style="left:21px;top:49px" width="18" height="18" viewBox="0 0 18 18"><rect class="icf" x="4.5" y="4.5" width="9" height="9" rx=".5"/><path d="M1 5V1.5H5 M13 1.5H17V5 M17 13V16.5H13 M5 16.5H1V13" fill="none" stroke="#9a9a9a" stroke-width="1.5"/></svg>
<div class="t" style="left:50px;top:48px;font-size:14.2px;line-height:20px;height:20px">Cube</div>
<svg style="left:100px;top:52px" width="9" height="12" viewBox="0 0 9 12"><path d="M2 1l5 5l-5 5" fill="none" stroke="#e0e0e0" stroke-width="1.3"/></svg>
<svg style="left:120px;top:48px" width="22" height="20" viewBox="0 0 22 20"><circle cx="3.6" cy="4" r="2" fill="#8a8a8a"/><circle cx="9.2" cy="5" r="2.1" fill="#9a9a9a"/><circle cx="5.6" cy="10.5" r="2.9" fill="#bdbdbd"/><circle cx="14" cy="14.5" r="4.6" fill="#f0f0f0"/></svg>
<div class="t jp" style="left:150px;top:48px;line-height:20px;height:20px">ジオメトリノード</div>
<svg style="left:279px;top:52px" width="9" height="12" viewBox="0 0 9 12"><path d="M2 1l5 5l-5 5" fill="none" stroke="#e0e0e0" stroke-width="1.3"/></svg>
<svg style="left:298px;top:48px" width="22" height="20" viewBox="0 0 22 20"><rect x="2.5" y="2" width="8.5" height="5" rx="1.5" fill="#e8e8e8"/><rect x="2.5" y="8.5" width="8.5" height="2" rx=".5" fill="#e8e8e8"/><rect x="2" y="13" width="9" height="5.5" rx="1.5" fill="#e8e8e8"/><path d="M12.5 4.5h1.5a2 2 0 0 1 2 2v7a2 2 0 0 1 -2 2h-1" fill="none" stroke="#e8e8e8" stroke-width="1.2"/></svg>
<div class="t" style="left:328px;top:48px;font-size:14.2px;line-height:20px;height:20px">Raymarch</div>

</div></div><!-- ===== Timeline ===== -->
<div class="area" id="timeline" style="left:3px;top:927px;width:1558.5px;height:66.8px;background:#1d1d1d"><div class="a" style="left:1px;top:0;width:1557px;height:66.8px">
<div class="a" style="left:-1px;top:0;width:1560px;height:31px;background:#303030"></div>
<div class="btn" style="left:9px;top:4px;width:37px;height:23.5px"></div>
<svg style="left:12px;top:6px" width="34" height="20" viewBox="0 0 34 20"><circle cx="10.5" cy="10" r="8" fill="#e8e8e8"/><path d="M10.5 10l4.5 -6.5 M10.5 10l4.5 4.5" stroke="#252525" stroke-width="1.7" fill="none"/><path class="chev" d="M22.5 8.5l3 3l3 -3"/></svg>
<div class="t" style="left:61px;top:5.5px">View</div>
<div class="t" style="left:110px;top:5.5px">Marker</div>
<div class="btn" style="left:170px;top:4px;width:91px;height:23.5px"></div>
<div class="t" style="left:180px;top:5.5px">Playback</div>
<svg style="left:247px;top:12px" width="10" height="8" viewBox="0 0 10 8"><path class="chev" d="M1.5 2l3.5 3.5l3.5 -3.5"/></svg>
<!-- record -->
<div class="a" style="left:602px;top:4px;width:46.5px;height:23.5px;border-radius:5px;background:#2b2b2b;border:1px solid #3a3a3a;overflow:hidden"><div class="a" style="left:-1px;top:-1px;width:23px;height:24px;background:#505050"></div></div>
<svg style="left:602px;top:4px" width="47" height="24" viewBox="0 0 47 24"><circle cx="11.5" cy="11.5" r="5.8" fill="none" stroke="#d0d0d0" stroke-width="1.3"/><path d="M31 10l3 3l3 -3" fill="none" stroke="#555" stroke-width="1.3"/></svg>
<!-- transport -->
<div class="a" style="left:655.5px;top:4px;width:142.5px;height:23.5px;border-radius:5px;background:#505050;overflow:hidden"><div class="a" style="left:23.5px;top:0;width:1px;height:24px;background:#3a3a3a"></div><div class="a" style="left:47.3px;top:0;width:1px;height:24px;background:#3a3a3a"></div><div class="a" style="left:71px;top:0;width:1px;height:24px;background:#3a3a3a"></div><div class="a" style="left:94.8px;top:0;width:1px;height:24px;background:#3a3a3a"></div><div class="a" style="left:118.5px;top:0;width:1px;height:24px;background:#3a3a3a"></div></div>
<svg style="left:655.5px;top:4px" width="143" height="24" viewBox="0 0 143 24" fill="#ececec"><rect x="6" y="6" width="2" height="11.5"/><path d="M17.5 6v11.5l-8 -5.750z"/><path d="M35.5 5.5l-6 6.250l6 6.250l6 -6.250z M49.5 7v9.5l-6 -4.750z" transform="translate(-4,0)"/><path d="M65.5 5v13.5l-11 -6.750z"/><path d="M77.5 5v13.5l11 -6.750z"/><path d="M107.5 5.5l-6 6.250l6 6.250l6 -6.250z M93.5 7v9.5l6 -4.750z" transform="translate(4,0)"/><rect x="135" y="6" width="2" height="11.5"/><path d="M125.5 6v11.5l8 -5.750z"/></svg>
<div class="a" style="left:805.5px;top:4px;width:70.5px;height:23.5px;border-radius:5px;background:#252525;border:1px solid #3a3a3a;overflow:hidden"><div class="a" style="left:-1px;top:-1px;width:47px;height:24px;background:#505050"></div><div class="a" style="left:22px;top:-1px;width:1px;height:24px;background:#3a3a3a"></div></div>
<svg style="left:805.5px;top:4px" width="71" height="24" viewBox="0 0 71 24" fill="#ececec"><path d="M12.5 6.5v10.5l-8 -5.250z"/><rect x="14.5" y="6.5" width="2.2" height="10.5"/><rect x="29.5" y="6.5" width="2.2" height="10.5"/><path d="M33.5 6.5v10.5l8 -5.250z"/><path class="chev" d="M55.5 10.5l3 3l3 -3"/></svg>
<div class="a" style="left:883.5px;top:4px;width:46.5px;height:23.5px;border-radius:5px;background:#252525;border:1px solid #3a3a3a;overflow:hidden"><div class="a" style="left:-1px;top:-1px;width:23px;height:24px;background:#505050"></div></div>
<svg style="left:883.5px;top:4px" width="47" height="24" viewBox="0 0 47 24"><path d="M5 16.5h2.5V11a4 4 0 0 1 8 0v5.5H18 M7.5 16.5V11a4 4 0 0 1 8 0v5.5" fill="none" stroke="#d8d8d8" stroke-width="1.2"/><path d="M3.5 19.5h16" stroke="#d8d8d8" stroke-width="1.2"/><path class="chev" d="M31 10.5l3 3l3 -3"/></svg>
<!-- frame fields -->
<div class="fld" style="left:1152px;top:4.5px;width:87.5px;height:22px;border-radius:4px;line-height:22px">1</div>
<div class="a" style="left:1247px;top:4.5px;width:233.5px;height:22px;border-radius:4px;background:#545454;overflow:hidden"><div class="a" style="left:22.5px;top:0;width:1px;height:22px;background:#3a3a3a"></div><div class="a" style="left:130.5px;top:0;width:1px;height:22px;background:#3a3a3a"></div></div>
<svg style="left:1248px;top:5px" width="22" height="22" viewBox="0 0 22 22"><circle cx="10" cy="12" r="6.5" fill="none" stroke="#e0e0e0" stroke-width="1.3"/><path d="M10 8.5V12h3 M7.5 2.5h5 M10 2.5V5 M15 6.5l2 -2" fill="none" stroke="#e0e0e0" stroke-width="1.3"/></svg>
<div class="t" style="left:1289px;top:5.5px">Start</div><div class="t" style="left:1351px;top:5.5px">1</div>
<div class="t" style="left:1397px;top:5.5px">End</div><div class="t" style="left:1437px;top:5.5px">250</div>
<div class="btn" style="left:1500.5px;top:4px;width:47px;height:23.5px;overflow:hidden"><div class="a sel" style="left:-1px;top:-1px;width:23px;height:24px"></div></div>
<svg style="left:1502px;top:5.5px" width="44" height="20" viewBox="0 0 44 20"><circle cx="12" cy="7.5" r="5.8" fill="#fff"/><path d="M7 8.5A5.5 5.5 0 1 0 14 15" fill="none" stroke="#dfe6f2" stroke-width="1.4"/><path class="chev" d="M30.5 8.5l3 3l3 -3"/></svg>

<div class="a" style="left:9px;top:59px;width:1539px;height:6px;border-radius:3px;background:#2e2e2e"></div>
<div class="a" style="left:50.2px;top:59px;width:1px;height:6px;background:#1a1a1a"></div><div class="a" style="left:85.0px;top:59px;width:1px;height:6px;background:#1a1a1a"></div><div class="a" style="left:119.8px;top:59px;width:1px;height:6px;background:#1a1a1a"></div><div class="a" style="left:154.6px;top:59px;width:1px;height:6px;background:#1a1a1a"></div><div class="a" style="left:189.4px;top:59px;width:1px;height:6px;background:#1a1a1a"></div><div class="a" style="left:224.2px;top:59px;width:1px;height:6px;background:#1a1a1a"></div><div class="a" style="left:259.0px;top:59px;width:1px;height:6px;background:#1a1a1a"></div><div class="a" style="left:293.8px;top:59px;width:1px;height:6px;background:#1a1a1a"></div><div class="a" style="left:328.6px;top:59px;width:1px;height:6px;background:#1a1a1a"></div><div class="a" style="left:363.4px;top:59px;width:1px;height:6px;background:#1a1a1a"></div><div class="a" style="left:398.2px;top:59px;width:1px;height:6px;background:#1a1a1a"></div><div class="a" style="left:433.0px;top:59px;width:1px;height:6px;background:#1a1a1a"></div><div class="a" style="left:467.8px;top:59px;width:1px;height:6px;background:#1a1a1a"></div><div class="a" style="left:502.6px;top:59px;width:1px;height:6px;background:#1a1a1a"></div><div class="a" style="left:537.4px;top:59px;width:1px;height:6px;background:#1a1a1a"></div><div class="a" style="left:572.2px;top:59px;width:1px;height:6px;background:#1a1a1a"></div><div class="a" style="left:607.0px;top:59px;width:1px;height:6px;background:#1a1a1a"></div><div class="a" style="left:641.8px;top:59px;width:1px;height:6px;background:#1a1a1a"></div><div class="a" style="left:676.6px;top:59px;width:1px;height:6px;background:#1a1a1a"></div><div class="a" style="left:711.4px;top:59px;width:1px;height:6px;background:#1a1a1a"></div><div class="a" style="left:746.2px;top:59px;width:1px;height:6px;background:#1a1a1a"></div><div class="a" style="left:781.0px;top:59px;width:1px;height:6px;background:#1a1a1a"></div><div class="a" style="left:815.8px;top:59px;width:1px;height:6px;background:#1a1a1a"></div><div class="a" style="left:850.6px;top:59px;width:1px;height:6px;background:#1a1a1a"></div><div class="a" style="left:885.4px;top:59px;width:1px;height:6px;background:#1a1a1a"></div><div class="a" style="left:920.2px;top:59px;width:1px;height:6px;background:#1a1a1a"></div><div class="a" style="left:955.0px;top:59px;width:1px;height:6px;background:#1a1a1a"></div><div class="a" style="left:989.8px;top:59px;width:1px;height:6px;background:#1a1a1a"></div><div class="a" style="left:1024.6px;top:59px;width:1px;height:6px;background:#1a1a1a"></div><div class="a" style="left:1059.4px;top:59px;width:1px;height:6px;background:#1a1a1a"></div><div class="a" style="left:1094.2px;top:59px;width:1px;height:6px;background:#1a1a1a"></div><div class="a" style="left:1129.0px;top:59px;width:1px;height:6px;background:#1a1a1a"></div><div class="a" style="left:1163.8px;top:59px;width:1px;height:6px;background:#1a1a1a"></div><div class="a" style="left:1198.6px;top:59px;width:1px;height:6px;background:#1a1a1a"></div><div class="a" style="left:1233.4px;top:59px;width:1px;height:6px;background:#1a1a1a"></div><div class="a" style="left:1268.2px;top:59px;width:1px;height:6px;background:#1a1a1a"></div><div class="a" style="left:1303.0px;top:59px;width:1px;height:6px;background:#1a1a1a"></div><div class="a" style="left:1337.8px;top:59px;width:1px;height:6px;background:#1a1a1a"></div><div class="a" style="left:1372.6px;top:59px;width:1px;height:6px;background:#1a1a1a"></div><div class="a" style="left:1407.4px;top:59px;width:1px;height:6px;background:#1a1a1a"></div><div class="a" style="left:1442.2px;top:59px;width:1px;height:6px;background:#1a1a1a"></div><div class="a" style="left:1477.0px;top:59px;width:1px;height:6px;background:#1a1a1a"></div><div class="a" style="left:1511.8px;top:59px;width:1px;height:6px;background:#1a1a1a"></div>
<div class="t" style="left:99.8px;top:34.5px;width:40px;text-align:center;color:#b4b4b4">12</div>
<div class="t" style="left:169.4px;top:34.5px;width:40px;text-align:center;color:#b4b4b4">24</div>
<div class="t" style="left:239.0px;top:34.5px;width:40px;text-align:center;color:#b4b4b4">36</div>
<div class="t" style="left:308.6px;top:34.5px;width:40px;text-align:center;color:#b4b4b4">48</div>
<div class="t" style="left:378.2px;top:34.5px;width:40px;text-align:center;color:#b4b4b4">60</div>
<div class="t" style="left:447.8px;top:34.5px;width:40px;text-align:center;color:#b4b4b4">72</div>
<div class="t" style="left:517.4px;top:34.5px;width:40px;text-align:center;color:#b4b4b4">84</div>
<div class="t" style="left:587.0px;top:34.5px;width:40px;text-align:center;color:#b4b4b4">96</div>
<div class="t" style="left:656.6px;top:34.5px;width:40px;text-align:center;color:#b4b4b4">108</div>
<div class="t" style="left:726.2px;top:34.5px;width:40px;text-align:center;color:#b4b4b4">120</div>
<div class="t" style="left:795.8px;top:34.5px;width:40px;text-align:center;color:#b4b4b4">132</div>
<div class="t" style="left:865.4px;top:34.5px;width:40px;text-align:center;color:#b4b4b4">144</div>
<div class="t" style="left:935.0px;top:34.5px;width:40px;text-align:center;color:#b4b4b4">156</div>
<div class="t" style="left:1004.6px;top:34.5px;width:40px;text-align:center;color:#b4b4b4">168</div>
<div class="t" style="left:1074.2px;top:34.5px;width:40px;text-align:center;color:#b4b4b4">180</div>
<div class="t" style="left:1143.8px;top:34.5px;width:40px;text-align:center;color:#b4b4b4">192</div>
<div class="t" style="left:1213.4px;top:34.5px;width:40px;text-align:center;color:#b4b4b4">204</div>
<div class="t" style="left:1283.0px;top:34.5px;width:40px;text-align:center;color:#b4b4b4">216</div>
<div class="t" style="left:1352.6px;top:34.5px;width:40px;text-align:center;color:#b4b4b4">228</div>
<div class="t" style="left:1422.2px;top:34.5px;width:40px;text-align:center;color:#b4b4b4">240</div>
<div class="t" style="left:1491.8px;top:34.5px;width:40px;text-align:center;color:#b4b4b4">252</div>
<div class="a sel" style="left:41.5px;top:33px;width:29px;height:25px;border-radius:4px"></div><div class="a sel" style="left:55px;top:58px;width:2px;height:9px"></div>
<svg style="left:52px;top:57.5px" width="8" height="6" viewBox="0 0 8 6"><path d="M0 0h8l-4 5z" fill="#4772b3"/></svg>
<div class="t" style="left:36px;top:34.5px;width:40px;text-align:center;color:#fff">1</div>
</div></div>
<!-- ===== Status bar ===== -->
<div class="a" style="left:0;top:996px;width:1904px;height:27px;background:#181818"></div>
<svg style="left:7px;top:998px" width="200" height="20" viewBox="0 0 200 20" fill="none" stroke="#8e8e8e" stroke-width="1.2"><rect x=".8" y=".8" width="13" height="17.5" rx="3.5"/><path d="M1.5 1.5h5v7h-5z" fill="#8e8e8e"/><rect x="70.8" y=".8" width="13" height="17.5" rx="3.5"/><rect x="75.5" y="1.5" width="4" height="7" rx="1.5" fill="#8e8e8e"/><rect x="158.8" y=".8" width="13" height="17.5" rx="3.5"/><path d="M166 1.5h5v7h-5z" fill="#8e8e8e"/></svg>
<div class="t" style="left:24px;top:998px;color:#b4b4b4">Select</div>
<div class="t" style="left:94px;top:998px;color:#b4b4b4">Pan View</div>
<div class="t" style="left:182px;top:998px;color:#b4b4b4">Options</div>
<svg style="left:1819px;top:998px" width="22" height="20" viewBox="0 0 22 20" fill="none" stroke="#9a9a9a" stroke-width="1.2"><circle cx="9.5" cy="10" r="8"/><ellipse cx="9.5" cy="10" rx="3.7" ry="8"/><path d="M1.5 10h16 M3 5.5h13 M3 14.5h13"/></svg>
<div class="t" style="left:1835px;top:1004px;font-size:9.5px;color:#9a9a9a">1</div>
<div class="a" style="left:1846.5px;top:998.5px;width:1px;height:18px;background:#6a6a6a"></div>
<div class="t" style="left:1853px;top:998px;color:#9a9a9a">5.0.0</div>
<!-- ===== Outliner ===== -->
<div class="area" id="outliner" style="left:1565.5px;top:63px;width:335.2px;height:171px;background:#292929">

<div class="btn" style="left:8.5px;top:4.5px;width:37.5px;height:23.5px"></div>
<svg style="left:11.5px;top:6.5px" width="34" height="20" viewBox="0 0 34 20"><rect x="2" y="1.5" width="6" height="3.5" rx="1" fill="#e8e8e8"/><path d="M4.5 5v10.5h4 M4.5 9.5h4" fill="none" stroke="#b0b0b0" stroke-width="1.2"/><rect x="9.5" y="7.5" width="8" height="3.5" rx="1" fill="#e8e8e8"/><rect x="9.5" y="13.5" width="8" height="3.5" rx="1" fill="#e8e8e8"/><path class="chev" d="M22 8.5l3 3l3 -3"/></svg>
<div class="btn" style="left:53.0px;top:4.5px;width:37.5px;height:23.5px"></div>
<svg style="left:55.5px;top:6.5px" width="34" height="20" viewBox="0 0 34 20"><path class="ic" d="M6.5 2H17V12.5H6.5Z" stroke-width="1.3"/><path d="M4.5 4.5V14.5H14.5 M2.5 7V17H12.5" fill="none" stroke="#9a9a9a" stroke-width="1.3"/><path class="icf" d="M7.5 12l3.5 -6l2 3.5l1.2 -1.5l2.3 4Z"/><circle class="icf" cx="14.5" cy="5" r="1"/><path class="chev" d="M22 8.5l3 3l3 -3"/></svg>
<div class="a" style="left:110.0px;top:4.5px;width:142.5px;height:23.5px;border-radius:5px;background:#1d1d1d;border:1px solid #3a3a3a"></div>
<svg style="left:113.5px;top:7px" width="20" height="20" viewBox="0 0 20 20"><circle cx="7.5" cy="7.5" r="5.3" fill="none" stroke="#e0e0e0" stroke-width="1.4"/><path d="M11.5 11.5l6 6" stroke="#e0e0e0" stroke-width="1.4"/></svg>
<div class="t" style="left:141.5px;top:6px;color:#7a7a7a">Search</div>
<div class="btn" style="left:272.0px;top:4.5px;width:37.5px;height:23.5px"></div>
<svg style="left:274.5px;top:6.5px" width="34" height="20" viewBox="0 0 34 20"><path class="ic" d="M2 2.5h15l-5.5 7v7l-4 -2.5v-4.5z" stroke-width="1.3"/><path class="chev" d="M22 8.5l3 3l3 -3"/></svg>
<div class="a" style="left:316.5px;top:4.5px;width:30px;height:23.5px;border-radius:5px;background:#505050"></div>
<svg style="left:318.5px;top:6.5px" width="20" height="20" viewBox="0 0 20 20"><path d="M2 4.5h11v3H2z M3 7.5h9v9H3z" fill="none" stroke="#cfcfcf" stroke-width="1.3"/><circle cx="14.5" cy="4.5" r="3.5" fill="#cfcfcf"/></svg>

<div class="a" style="left:4.0px;top:105px;width:330px;height:22px;border-radius:4px;background:#334d80;border:1px solid #4772b3"></div>
<div class="a" style="left:35.09999999999991px;top:86.5px;width:1px;height:59px;background:#505050"></div>
<svg style="left:26.5px;top:35.5px" width="18" height="18" viewBox="0 0 18 18"><rect x="1.2" y="1.5" width="15.6" height="3.6" fill="#e2e2e2"/><path d="M2.3 6.3h13.4v10H2.3z M6.5 8.5h5v1.6h-5z" fill="#e2e2e2" fill-rule="evenodd"/></svg><div class="t" style="left:52.5px;top:34.5px;color:#c8c8c8">Scene Collection</div>
<svg style="left:30.5px;top:64px" width="12" height="8" viewBox="0 0 12 8"><path d="M1 1.5l5 5l5 -5" fill="none" stroke="#d0d0d0" stroke-width="1.3"/></svg><div class="a" style="left:48.5px;top:57.0px;width:23px;height:23px;border-radius:5px;background:#4a4a4a;border:1px solid #5a5a5a"></div><svg style="left:51.0px;top:59.5px" width="18" height="18" viewBox="0 0 18 18"><rect x="1.2" y="1.5" width="15.6" height="3.6" fill="#e2e2e2"/><path d="M2.3 6.3h13.4v10H2.3z M6.5 8.5h5v1.6h-5z" fill="#e2e2e2" fill-rule="evenodd"/></svg><div class="t" style="left:76.5px;top:58.5px">Collection</div>
<svg style="left:257.0px;top:61.5px" width="14" height="14" viewBox="0 0 14 14"><rect width="14" height="14" rx="2" fill="#e6e6e6"/><path d="M3 7l3 3l5 -6" fill="none" stroke="#222" stroke-width="1.8"/></svg>
<svg style="left:278.5px;top:62.5px" width="18" height="12" viewBox="0 0 18 12"><path d="M.5 6C3 1.5 6 .5 9 .5S15 1.5 17.5 6C15 10.5 12 11.5 9 11.5S3 10.5 .5 6Z" fill="#e6e6e6"/><circle cx="9" cy="6" r="3.7" fill="#292929"/><circle cx="9" cy="6" r="2" fill="#e6e6e6"/></svg><svg style="left:303.5px;top:60px" width="18" height="16" viewBox="0 0 18 16"><path d="M1 4.5a1.5 1.5 0 0 1 1.5 -1.5h2l1.5 -2.5h6l1.5 2.5h2a1.5 1.5 0 0 1 1.5 1.5v9a1.5 1.5 0 0 1 -1.5 1.5h-13a1.5 1.5 0 0 1 -1.5 -1.5Z" fill="#e6e6e6"/><circle cx="9" cy="8.7" r="4.3" fill="#292929"/><circle cx="9" cy="8.7" r="2.6" fill="none" stroke="#e6e6e6" stroke-width="1.2"/></svg>
<svg style="left:55.5px;top:86.5px" width="8" height="12" viewBox="0 0 8 12"><path d="M1.5 1l5 5l-5 5" fill="none" stroke="#d0d0d0" stroke-width="1.3"/></svg>
<svg style="left:74.5px;top:83px" width="22" height="20" viewBox="0 0 22 20" fill="#d58d55"><circle cx="5.5" cy="5.5" r="3.8"/><circle cx="13" cy="4.8" r="4.5"/><rect x="2" y="8.5" width="14" height="9" rx="1.5"/><path d="M16.5 11.5l5 -2.5v8l-5 -2.5z"/><circle cx="5.5" cy="5.5" r="1.3" fill="#292929"/><circle cx="13" cy="4.8" r="1.6" fill="#292929"/></svg>
<div class="t" style="left:100.5px;top:82.5px;color:#d0d0d0">Camera</div>
<div class="a" style="left:176.0px;top:81px;width:23px;height:23px;border-radius:5px;background:#4a4a4a;border:1px solid #5a5a5a"></div>
<svg style="left:178.5px;top:84px" width="19" height="17" viewBox="0 0 19 17" fill="none" stroke="#2dc8a0" stroke-width="1.3"><circle cx="4.5" cy="4.5" r="2.8"/><circle cx="11" cy="4" r="3.3"/><rect x="1.5" y="8" width="11.5" height="7.5" rx="1.2"/><path d="M13.5 10.5l4 -2v6.5l-4 -2z"/></svg>
<svg style="left:278.5px;top:86.5px" width="18" height="12" viewBox="0 0 18 12"><path d="M.5 6C3 1.5 6 .5 9 .5S15 1.5 17.5 6C15 10.5 12 11.5 9 11.5S3 10.5 .5 6Z" fill="#e6e6e6"/><circle cx="9" cy="6" r="3.7" fill="#292929"/><circle cx="9" cy="6" r="2" fill="#e6e6e6"/></svg><svg style="left:303.5px;top:84px" width="18" height="16" viewBox="0 0 18 16"><path d="M1 4.5a1.5 1.5 0 0 1 1.5 -1.5h2l1.5 -2.5h6l1.5 2.5h2a1.5 1.5 0 0 1 1.5 1.5v9a1.5 1.5 0 0 1 -1.5 1.5h-13a1.5 1.5 0 0 1 -1.5 -1.5Z" fill="#e6e6e6"/><circle cx="9" cy="8.7" r="4.3" fill="#292929"/><circle cx="9" cy="8.7" r="2.6" fill="none" stroke="#e6e6e6" stroke-width="1.2"/></svg>
<svg style="left:55.5px;top:110.5px" width="8" height="12" viewBox="0 0 8 12"><path d="M1.5 1l5 5l-5 5" fill="none" stroke="#d0d0d0" stroke-width="1.3"/></svg>
<div class="a" style="left:73.0px;top:105px;width:23px;height:23px;border-radius:5px;background:#5a6a8c;border:1px solid #7888a8"></div>
<svg style="left:75.5px;top:108px" width="18" height="17" viewBox="0 0 18 17"><path d="M2 2.5h14l-7 12.5z" fill="none" stroke="#d58d55" stroke-width="2.4" stroke-linejoin="round"/></svg>
<div class="t" style="left:100.5px;top:106.5px;color:#ffaf29">Cube</div>
<svg style="left:160.5px;top:107px" width="20" height="20" viewBox="0 0 20 20"><path d="M3 17.2a2.3 2.3 0 0 1 -.3 -3.3L8.8 8a4.6 4.6 0 0 1 5.8 -5.8L11.7 5l.6 2.6l2.6 .6l2.9 -2.9A4.6 4.6 0 0 1 12 11.2L6.3 17.2a2.3 2.3 0 0 1 -3.3 0Z" fill="none" stroke="#5a8fe0" stroke-width="1.4" stroke-linejoin="round"/></svg>
<svg style="left:185.5px;top:107px" width="20" height="20" viewBox="0 0 20 20" fill="none" stroke="#2dc8a0" stroke-width="1.3"><path d="M3.5 3.5h12.5l-6.2 12z"/><rect x="1.5" y="1.5" width="3.6" height="3.6" fill="#334d80"/><rect x="14.5" y="1.5" width="3.6" height="3.6" fill="#334d80"/><rect x="8" y="14" width="3.6" height="3.6" fill="#334d80"/></svg>
<svg style="left:278.5px;top:110.5px" width="18" height="12" viewBox="0 0 18 12"><path d="M.5 6C3 1.5 6 .5 9 .5S15 1.5 17.5 6C15 10.5 12 11.5 9 11.5S3 10.5 .5 6Z" fill="#e6e6e6"/><circle cx="9" cy="6" r="3.7" fill="#292929"/><circle cx="9" cy="6" r="2" fill="#e6e6e6"/></svg><svg style="left:303.5px;top:108px" width="18" height="16" viewBox="0 0 18 16"><path d="M1 4.5a1.5 1.5 0 0 1 1.5 -1.5h2l1.5 -2.5h6l1.5 2.5h2a1.5 1.5 0 0 1 1.5 1.5v9a1.5 1.5 0 0 1 -1.5 1.5h-13a1.5 1.5 0 0 1 -1.5 -1.5Z" fill="#e6e6e6"/><circle cx="9" cy="8.7" r="4.3" fill="#292929"/><circle cx="9" cy="8.7" r="2.6" fill="none" stroke="#e6e6e6" stroke-width="1.2"/></svg>
<svg style="left:55.5px;top:134.5px" width="8" height="12" viewBox="0 0 8 12"><path d="M1.5 1l5 5l-5 5" fill="none" stroke="#d0d0d0" stroke-width="1.3"/></svg>
<svg style="left:75.5px;top:131px" width="18" height="20" viewBox="0 0 18 20" fill="#d58d55"><path d="M9 1a7 7 0 0 1 4.5 12.5v1.5h-9v-1.5A7 7 0 0 1 9 1Z"/><rect x="5" y="16" width="8" height="1.5"/><rect x="6" y="18.2" width="6" height="1.5"/><path d="M6 7.5h6 M7 7.5v3.5 M11 7.5v3.5" stroke="#282828" stroke-width="1.2" fill="none"/></svg>
<div class="t" style="left:100.5px;top:130.5px;color:#d0d0d0">Light</div>
<svg style="left:158.5px;top:130px" width="20" height="20" viewBox="0 0 20 20" fill="none" stroke="#2dc8a0" stroke-width="1.3"><circle cx="9.5" cy="8" r="6.5"/><path d="M9.5 6v12"/><circle cx="9.5" cy="6" r="1" fill="#2dc8a0"/></svg>
<svg style="left:278.5px;top:134.5px" width="18" height="12" viewBox="0 0 18 12"><path d="M.5 6C3 1.5 6 .5 9 .5S15 1.5 17.5 6C15 10.5 12 11.5 9 11.5S3 10.5 .5 6Z" fill="#e6e6e6"/><circle cx="9" cy="6" r="3.7" fill="#292929"/><circle cx="9" cy="6" r="2" fill="#e6e6e6"/></svg><svg style="left:303.5px;top:132px" width="18" height="16" viewBox="0 0 18 16"><path d="M1 4.5a1.5 1.5 0 0 1 1.5 -1.5h2l1.5 -2.5h6l1.5 2.5h2a1.5 1.5 0 0 1 1.5 1.5v9a1.5 1.5 0 0 1 -1.5 1.5h-13a1.5 1.5 0 0 1 -1.5 -1.5Z" fill="#e6e6e6"/><circle cx="9" cy="8.7" r="4.3" fill="#292929"/><circle cx="9" cy="8.7" r="2.6" fill="none" stroke="#e6e6e6" stroke-width="1.2"/></svg>
</div>
<!-- ===== Properties ===== -->
<div class="area" id="props" style="left:1565.5px;top:236.5px;width:335.2px;height:757.2px;background:#303030">
<div class="a" style="left:0;top:31px;width:34.5px;height:726px;background:#1b1b1b"></div>
<div class="btn" style="left:10.0px;top:4.0px;width:37px;height:23px"></div>
<svg style="left:12.5px;top:5.5px" width="34" height="20" viewBox="0 0 34 20"><rect x="2" y="2" width="14" height="7" rx="3.5" fill="#e8e8e8"/><circle cx="12.3" cy="5.5" r="2" fill="#303030"/><rect x="2" y="11" width="14" height="7" rx="3.5" fill="#e8e8e8"/><circle cx="5.7" cy="14.5" r="2" fill="#303030"/><path class="chev" d="M22 8.5l3 3l3 -3"/></svg>
<div class="a" style="left:93.0px;top:4.0px;width:142px;height:23px;border-radius:5px;background:#1d1d1d;border:1px solid #3a3a3a"></div>
<svg style="left:96.5px;top:6.5px" width="20" height="20" viewBox="0 0 20 20"><circle cx="7.5" cy="7.5" r="5.3" fill="none" stroke="#e0e0e0" stroke-width="1.4"/><path d="M11.5 11.5l6 6" stroke="#e0e0e0" stroke-width="1.4"/></svg>
<div class="t" style="left:124.5px;top:5.5px;color:#7a7a7a">Search</div>
<div class="btn" style="left:302.0px;top:4.0px;width:23px;height:23px"></div>
<svg style="left:308.5px;top:12.0px" width="10" height="8" viewBox="0 0 10 8"><path class="chev" d="M1.5 2l3.5 3.5l3.5 -3.5"/></svg>

<div class="a" style="left:3.5px;top:41.0px;width:31px;height:32px;border-radius:4px 0 0 4px;background:#212121"></div>
<div class="a" style="left:3.5px;top:81.5px;width:31px;height:168px;border-radius:4px 0 0 4px;background:#212121"></div>
<div class="a" style="left:3.5px;top:114.5px;width:31px;height:33px;border-radius:4px 0 0 4px;background:#303030"></div>
<div class="a" style="left:3.5px;top:259.5px;width:31px;height:31px;border-radius:4px 0 0 4px;background:#212121"></div><div class="a" style="left:3.5px;top:297.5px;width:31px;height:236px;border-radius:4px 0 0 4px;background:#212121"></div>
<svg style="left:8.200000000000045px;top:48.30000000000001px" width="20" height="20" viewBox="0 0 20 20"><path d="M5 2.5v8 M5 10.5a2 2 0 0 0 -2 2v3a2 2 0 0 0 4 0v-3a2 2 0 0 0 -2 -2Z" fill="#a6a6a6" stroke="#a6a6a6" stroke-width="1.2"/><path d="M14 9v8.5 M10.5 2.5v4a3.5 3.5 0 0 0 7 0v-4" fill="none" stroke="#a6a6a6" stroke-width="2"/></svg>
<svg style="left:8.200000000000045px;top:88.0px" width="20" height="20" viewBox="0 0 20 20"><rect x="2" y="6.5" width="16" height="11" rx="1.5" fill="none" stroke="#a6a6a6" stroke-width="1.5"/><rect x="4.5" y="9" width="8" height="6" fill="#a6a6a6"/><path d="M14.5 10h2 M14.5 13.5h2 M5 6.5l1.5 -3h5l1.5 3 M15 3.5v2" stroke="#a6a6a6" stroke-width="1.3" fill="none"/></svg>
<svg style="left:8.200000000000045px;top:121.0px" width="20" height="20" viewBox="0 0 20 20"><path d="M3 3h14v5.5a2 2 0 0 1 -2 2H5a2 2 0 0 1 -2 -2Z" fill="#e8e8e8"/><rect x="5.5" y="10" width="9" height="8" fill="none" stroke="#e8e8e8" stroke-width="1.4"/><path d="M7 17l3 -4.5l3 4.5z" fill="#e8e8e8"/></svg>
<svg style="left:8.200000000000045px;top:155.0px" width="20" height="20" viewBox="0 0 20 20"><path d="M6.5 2.5H17.5V13.5H6.5Z" fill="none" stroke="#a6a6a6" stroke-width="1.3"/><path d="M4.5 5V15.5H15 M2.5 7.5V17.5H13" fill="none" stroke="#9a9a9a" stroke-width="1.3"/><path d="M7.5 12.5l3.5 -6l2 3.5l1.2 -1.5l2.3 4Z" fill="#a6a6a6"/><circle cx="15" cy="5.3" r="1" fill="#a6a6a6"/></svg>
<svg style="left:8.200000000000045px;top:188.0px" width="20" height="20" viewBox="0 0 20 20"><path d="M6.5 2.5L11 15H2Z" fill="#a6a6a6"/><circle cx="16" cy="4.5" r="2.2" fill="#a6a6a6"/><circle cx="13.5" cy="13.5" r="3.6" fill="#212121" stroke="#a6a6a6" stroke-width="1.3"/></svg>
<svg style="left:8.200000000000045px;top:222.0px" width="20" height="20" viewBox="0 0 20 20"><circle cx="10" cy="10" r="7" fill="none" stroke="#c8606b" stroke-width="1.4"/><path d="M5.5 6.5c2 -1 3.5 0 3 2s1.5 2 1 4s-2.5 1.5 -3 -1s-2 -2.5 -1 -5Z M12 5c2 0 3 1.5 3.5 3s-1 2.5 -2 1.5s-2.5 -2.5 -1.5 -4.5Z" fill="#c8606b"/><path d="M2.5 17.5c3 1.5 12 -9 14 -15" fill="none" stroke="#c8606b" stroke-width="1.2"/></svg>
<svg style="left:8.200000000000045px;top:263.0px" width="20" height="20" viewBox="0 0 20 20"><rect x="2.5" y="2.5" width="15" height="3.6" fill="none" stroke="#dcdcdc" stroke-width="1.3"/><path d="M3.5 7v10.5h13V7 M7.5 10.5h5" fill="none" stroke="#dcdcdc" stroke-width="1.3"/></svg>
<svg style="left:8.200000000000045px;top:305.0px" width="20" height="20" viewBox="0 0 20 20"><rect x="5" y="5" width="10" height="10" fill="#d58d55"/><path d="M2 6V2H6 M14 2H18V6 M18 14V18H14 M6 18H2V14" fill="none" stroke="#8a5a35" stroke-width="1.5"/></svg>
<svg style="left:8.200000000000045px;top:339.0px" width="20" height="20" viewBox="0 0 20 20"><path d="M3 17.2a2.3 2.3 0 0 1 -.3 -3.3L8.8 8a4.6 4.6 0 0 1 5.8 -5.8L11.7 5l.6 2.6l2.6 .6l2.9 -2.9A4.6 4.6 0 0 1 12 11.2L6.3 17.2a2.3 2.3 0 0 1 -3.3 0Z" fill="#5a8fe0"/></svg>
<svg style="left:8.200000000000045px;top:372.0px" width="20" height="20" viewBox="0 0 20 20"><circle cx="4" cy="4" r="2.5" fill="#5a8fe0"/><circle cx="4.5" cy="16" r="1.7" fill="#5a8fe0"/><circle cx="16.5" cy="4.5" r="1.7" fill="#5a8fe0"/><circle cx="16" cy="16" r="2" fill="#5a8fe0"/><path d="M4 4L16 16 M4 4L4.5 16 M4 4L16.5 4.5" stroke="#5a8fe0" stroke-width="1.3"/></svg>
<svg style="left:8.200000000000045px;top:405.0px" width="20" height="20" viewBox="0 0 20 20"><circle cx="9.5" cy="11" r="3" fill="#5a8fe0"/><path d="M14 16.5A7.5 7.5 0 1 1 14 5.5" fill="none" stroke="#5a8fe0" stroke-width="1.5"/><circle cx="16.5" cy="4" r="2" fill="#5a8fe0"/></svg>
<svg style="left:8.200000000000045px;top:438.0px" width="20" height="20" viewBox="0 0 20 20"><path d="M2.5 12a6 6 0 0 1 6 -6l7.5 -3.5l1.5 3.5l-3 7.5a6 6 0 0 1 -12 -1.5Z" fill="none" stroke="#5a8fe0" stroke-width="1.5" stroke-linejoin="round"/><circle cx="8.5" cy="12" r="2.8" fill="none" stroke="#5a8fe0" stroke-width="1.5"/><circle cx="8.5" cy="12" r=".8" fill="#5a8fe0"/></svg>
<svg style="left:8.200000000000045px;top:471.0px" width="20" height="20" viewBox="0 0 20 20"><path d="M3.5 3.5h13l-6.5 13z" fill="none" stroke="#2dc8a0" stroke-width="1.4"/><rect x="1.5" y="1.5" width="4" height="4" fill="#212121" stroke="#2dc8a0" stroke-width="1.3"/><rect x="14.5" y="1.5" width="4" height="4" fill="#212121" stroke="#2dc8a0" stroke-width="1.3"/><rect x="8" y="14.5" width="4" height="4" fill="#212121" stroke="#2dc8a0" stroke-width="1.3"/></svg>
<svg style="left:8.200000000000045px;top:504.0px" width="20" height="20" viewBox="0 0 20 20"><circle cx="10" cy="10" r="7.5" fill="#c8606b"/><path d="M10 10V2.5A7.5 7.5 0 0 1 17.5 10Z M10 10V17.5A7.5 7.5 0 0 1 2.5 10Z" fill="#212121" fill-opacity=".75"/></svg>
<svg style="left:12.5px;top:554.5px" width="12" height="8" viewBox="0 0 12 8"><path d="M1.5 1.5l4.5 4.5l4.5 -4.5" fill="none" stroke="#555" stroke-width="1.3"/></svg>
<svg style="left:46.5px;top:41.5px" width="20" height="20" viewBox="0 0 20 20"><path d="M6.5 2.5L11 15H2Z" fill="#e8e8e8"/><circle cx="16" cy="4.5" r="2.2" fill="#e8e8e8"/><circle cx="13.5" cy="13.5" r="3.6" fill="#303030" stroke="#e8e8e8" stroke-width="1.3"/></svg>
<div class="t" style="left:75.5px;top:42.0px">Scene</div>
<svg style="left:302.5px;top:41.5px" width="22" height="22" viewBox="0 0 22 22"><path d="M2 19.5L8.5 13 M5.5 9.5L12 16 M8 11.5L13 4l5 5L10.5 14 M12.5 3.5l6 6" fill="none" stroke="#a8a8a8" stroke-width="1.3" stroke-linejoin="round" stroke-linecap="round"/></svg>
<div class="a" style="left:327.0px;top:33.5px;width:4px;height:551px;border-radius:2px;background:#484848"></div>
<div class="a" style="left:44.5px;top:76.0px;width:279px;height:257.5px;border-radius:5px;background:#3d3d3d"></div>
<svg style="left:52.5px;top:87.5px" width="12" height="8" viewBox="0 0 12 8"><path d="M1 1.5l5 5l5 -5" fill="none" stroke="#d0d0d0" stroke-width="1.3"/></svg><div class="t" style="left:69.5px;top:81.5px">Format</div>
<svg style="left:270.5px;top:81.5px" width="20" height="20" viewBox="0 0 20 20" fill="none" stroke="#e0e0e0" stroke-width="1.4"><path d="M3.5 1.5v17 M10 1.5v17 M16.5 1.5v17"/><path d="M1.5 11.5h4 M8 5.5h4 M14.5 13.5h4" stroke-width="2.6"/></svg>
<svg style="left:297.5px;top:88.5px" width="14" height="6" viewBox="0 0 14 6" fill="#5c5c5c"><rect x="0.3" y=".5" width="1.5" height="1.5"/><rect x="0.3" y="3.8" width="1.5" height="1.5"/><rect x="4.0" y=".5" width="1.5" height="1.5"/><rect x="4.0" y="3.8" width="1.5" height="1.5"/><rect x="7.7" y=".5" width="1.5" height="1.5"/><rect x="7.7" y="3.8" width="1.5" height="1.5"/><rect x="11.4" y=".5" width="1.5" height="1.5"/><rect x="11.4" y="3.8" width="1.5" height="1.5"/></svg>
<div class="lbl" style="right:182.0px;top:116.0px;color:#e4e4e4">Resolution X</div><div class="fld" style="left:163.5px;top:116.0px;width:150px;height:21.5px;line-height:21.5px;border-radius:4px 4px 0 0;background:#545454;">1024 px</div>
<div class="lbl" style="right:182.0px;top:140.0px;color:#e4e4e4">Y</div><div class="fld" style="left:163.5px;top:139.0px;width:150px;height:21.5px;line-height:21.5px;border-radius:0;background:#545454;">1024 px</div>
<div class="lbl" style="right:182.0px;top:164.0px;color:#e4e4e4">%</div><div class="fld" style="left:163.5px;top:162.0px;width:150px;height:23.0px;line-height:23.0px;border-radius:0 0 4px 4px;background:#4772b3;color:#fff">100%</div>
<div class="lbl" style="right:182.0px;top:194.0px;color:#e4e4e4">Aspect X</div><div class="fld" style="left:163.5px;top:193.5px;width:150px;height:21.5px;line-height:21.5px;border-radius:4px 4px 0 0;background:#545454;">1.000</div>
<div class="lbl" style="right:182.0px;top:218.0px;color:#e4e4e4">Y</div><div class="fld" style="left:163.5px;top:216.5px;width:150px;height:23px;line-height:23px;border-radius:0 0 4px 4px;background:#545454;">1.000</div>
<div class="a" style="left:163.5px;top:251.0px;width:16px;height:16px;border-radius:3.5px;background:#545454"></div><div class="t" style="left:183.5px;top:249.0px;color:#e4e4e4">Render Region</div>
<div class="a" style="left:163.5px;top:275.0px;width:16px;height:16px;border-radius:3.5px;background:#444"></div><div class="t" style="left:183.5px;top:273.0px;color:#8c8c8c">Crop to Render R...</div>
<div class="lbl" style="right:182.0px;top:302.5px;color:#e4e4e4">Frame Rate</div><div class="a" style="left:163.5px;top:302.0px;width:150px;height:22.0px;border-radius:4px;background:#282828;border:1px solid #3d3d3d"></div><div class="t" style="left:172.5px;top:303.0px">24 fps</div><svg style="left:300.5px;top:310.0px" width="10" height="8" viewBox="0 0 10 8"><path class="chev" d="M1.5 2l3.5 3.5l3.5 -3.5"/></svg>
<div class="a" style="left:44.5px;top:336.5px;width:279px;height:148px;border-radius:5px;background:#3d3d3d"></div>
<svg style="left:52.5px;top:347.5px" width="12" height="8" viewBox="0 0 12 8"><path d="M1 1.5l5 5l5 -5" fill="none" stroke="#d0d0d0" stroke-width="1.3"/></svg><div class="t" style="left:69.5px;top:341.5px">Frame Range</div><svg style="left:297.5px;top:348.5px" width="14" height="6" viewBox="0 0 14 6" fill="#5c5c5c"><rect x="0.3" y=".5" width="1.5" height="1.5"/><rect x="0.3" y="3.8" width="1.5" height="1.5"/><rect x="4.0" y=".5" width="1.5" height="1.5"/><rect x="4.0" y="3.8" width="1.5" height="1.5"/><rect x="7.7" y=".5" width="1.5" height="1.5"/><rect x="7.7" y="3.8" width="1.5" height="1.5"/><rect x="11.4" y=".5" width="1.5" height="1.5"/><rect x="11.4" y="3.8" width="1.5" height="1.5"/></svg>
<div class="lbl" style="right:182.0px;top:376.0px;color:#e4e4e4">Frame Start</div><div class="fld" style="left:163.5px;top:375.5px;width:150px;height:22px;line-height:22px;border-radius:4px 4px 0 0;background:#545454;">1</div>
<div class="lbl" style="right:182.0px;top:400.0px;color:#e4e4e4">End</div><div class="fld" style="left:163.5px;top:399.0px;width:150px;height:22.0px;line-height:22.0px;border-radius:0;background:#545454;">250</div>
<div class="lbl" style="right:182.0px;top:424.0px;color:#e4e4e4">Step</div><div class="fld" style="left:163.5px;top:422.5px;width:150px;height:23px;line-height:23px;border-radius:0 0 4px 4px;background:#545454;">1</div>
<svg style="left:70.5px;top:465.5px" width="8" height="12" viewBox="0 0 8 12"><path d="M1.5 1l5 5l-5 5" fill="none" stroke="#d0d0d0" stroke-width="1.3"/></svg><div class="t" style="left:85.5px;top:461.5px">Time Stretching</div>
<div class="a" style="left:44.5px;top:488.0px;width:279px;height:28.5px;border-radius:5px;background:#3d3d3d"></div>
<svg style="left:54.5px;top:497.0px" width="8" height="12" viewBox="0 0 8 12"><path d="M1.5 1l5 5l-5 5" fill="none" stroke="#d0d0d0" stroke-width="1.3"/></svg><div class="a" style="left:68.5px;top:495.0px;width:16px;height:16px;border-radius:3.5px;background:#4a4a4a"></div><div class="t" style="left:88.5px;top:493.0px;color:#e4e4e4">Stereoscopy</div><svg style="left:297.5px;top:500.0px" width="14" height="6" viewBox="0 0 14 6" fill="#5c5c5c"><rect x="0.3" y=".5" width="1.5" height="1.5"/><rect x="0.3" y="3.8" width="1.5" height="1.5"/><rect x="4.0" y=".5" width="1.5" height="1.5"/><rect x="4.0" y="3.8" width="1.5" height="1.5"/><rect x="7.7" y=".5" width="1.5" height="1.5"/><rect x="7.7" y="3.8" width="1.5" height="1.5"/><rect x="11.4" y=".5" width="1.5" height="1.5"/><rect x="11.4" y="3.8" width="1.5" height="1.5"/></svg>
<div class="a" style="left:44.5px;top:520.0px;width:279px;height:253.5px;border-radius:5px;background:#3d3d3d"></div>
<svg style="left:52.5px;top:531.5px" width="12" height="8" viewBox="0 0 12 8"><path d="M1 1.5l5 5l5 -5" fill="none" stroke="#d0d0d0" stroke-width="1.3"/></svg><div class="t" style="left:69.5px;top:525.5px">Output</div><svg style="left:297.5px;top:532.5px" width="14" height="6" viewBox="0 0 14 6" fill="#5c5c5c"><rect x="0.3" y=".5" width="1.5" height="1.5"/><rect x="0.3" y="3.8" width="1.5" height="1.5"/><rect x="4.0" y=".5" width="1.5" height="1.5"/><rect x="4.0" y="3.8" width="1.5" height="1.5"/><rect x="7.7" y=".5" width="1.5" height="1.5"/><rect x="7.7" y="3.8" width="1.5" height="1.5"/><rect x="11.4" y=".5" width="1.5" height="1.5"/><rect x="11.4" y="3.8" width="1.5" height="1.5"/></svg>
<div class="a" style="left:53.5px;top:559.5px;width:260px;height:22px;border-radius:4px;background:#1d1d1d;overflow:hidden"><div class="a" style="left:236px;top:0;width:24px;height:22px;background:#545454"></div></div>
<div class="t" style="left:62.5px;top:560.5px">/tmp\</div>
<svg style="left:292.5px;top:561.5px" width="18" height="18" viewBox="0 0 18 18"><path d="M1 2.5h6l1.5 2h8.5v3H1Z M1 8.5h16v7.5H1Z" fill="#e6e6e6"/></svg>
<div class="lbl" style="right:182.0px;top:590.5px;color:#e4e4e4">Saving</div><div class="a" style="left:163.5px;top:592.5px;width:16px;height:16px;border-radius:3.5px;background:#4772b3"></div><svg style="left:165.5px;top:594.5px" width="12" height="12" viewBox="0 0 12 12"><path d="M2 6.5l3 3l5.5 -7" fill="none" stroke="#fff" stroke-width="1.7"/></svg><div class="t" style="left:183.5px;top:590.5px;color:#e4e4e4">File Extensions</div>
<div class="a" style="left:163.5px;top:618.5px;width:16px;height:16px;border-radius:3.5px;background:#545454"></div><div class="t" style="left:183.5px;top:616.5px;color:#e4e4e4">Cache Result</div>
<div class="lbl" style="right:182.0px;top:646.5px;color:#e4e4e4">Media Type</div><div class="a" style="left:163.5px;top:645.5px;width:150px;height:21.5px;border-radius:4px;background:#282828;border:1px solid #3d3d3d"></div><div class="t" style="left:172.5px;top:646.25px">Image</div><svg style="left:300.5px;top:653.25px" width="10" height="8" viewBox="0 0 10 8"><path class="chev" d="M1.5 2l3.5 3.5l3.5 -3.5"/></svg>
<div class="lbl" style="right:182.0px;top:672.5px;color:#e4e4e4">File Format</div><div class="a" style="left:163.5px;top:671.5px;width:150px;height:21.5px;border-radius:4px;background:#282828;border:1px solid #3d3d3d"></div><div class="t" style="left:172.5px;top:672.25px">PNG (.png)</div><svg style="left:300.5px;top:679.25px" width="10" height="8" viewBox="0 0 10 8"><path class="chev" d="M1.5 2l3.5 3.5l3.5 -3.5"/></svg>
<div class="lbl" style="right:182.0px;top:698.5px;color:#e4e4e4">Color</div>
<div class="a" style="left:163.5px;top:697.5px;width:150px;height:22px;border-radius:4px;background:#545454;overflow:hidden"><div class="a sel" style="left:100px;top:0;width:50px;height:22px"></div><div class="a" style="left:48.5px;top:0;width:1px;height:22px;background:#3a3a3a"></div><div class="a" style="left:99.5px;top:0;width:1px;height:22px;background:#3a3a3a"></div></div>
<div class="t" style="left:163.5px;top:698.5px;width:49px;text-align:center">BW</div><div class="t" style="left:212.5px;top:698.5px;width:51px;text-align:center">RGB</div><div class="t" style="left:263.5px;top:698.5px;width:50px;text-align:center;color:#fff">RGBA</div>
<div class="lbl" style="right:182.0px;top:724.5px;color:#e4e4e4">Color Depth</div>
<div class="a" style="left:163.5px;top:723.5px;width:150px;height:22px;border-radius:4px;background:#545454;overflow:hidden"><div class="a sel" style="left:0;top:0;width:74.5px;height:22px"></div><div class="a" style="left:74.5px;top:0;width:1px;height:22px;background:#3a3a3a"></div></div>
<div class="t" style="left:163.5px;top:724.5px;width:75px;text-align:center;color:#fff">8</div><div class="t" style="left:238.5px;top:724.5px;width:75px;text-align:center">16</div>
<div class="lbl" style="right:182.0px;top:750.5px;color:#e4e4e4">Compression</div>
<div class="a" style="left:163.5px;top:749.5px;width:150px;height:22px;border-radius:4px;background:#545454;overflow:hidden"><div class="a sel" style="left:0;top:0;width:20px;height:22px"></div></div>
<div class="t" style="left:163.5px;top:750.5px;width:150px;text-align:center">15%</div>
</div><div class="a" style="left:0;top:0;width:1903px;height:1022.5px;border:1px solid #3c3c3c;border-radius:8px;pointer-events:none;box-shadow:0 0 0 12px #1a1a1a"></div>
</body>
</html>
